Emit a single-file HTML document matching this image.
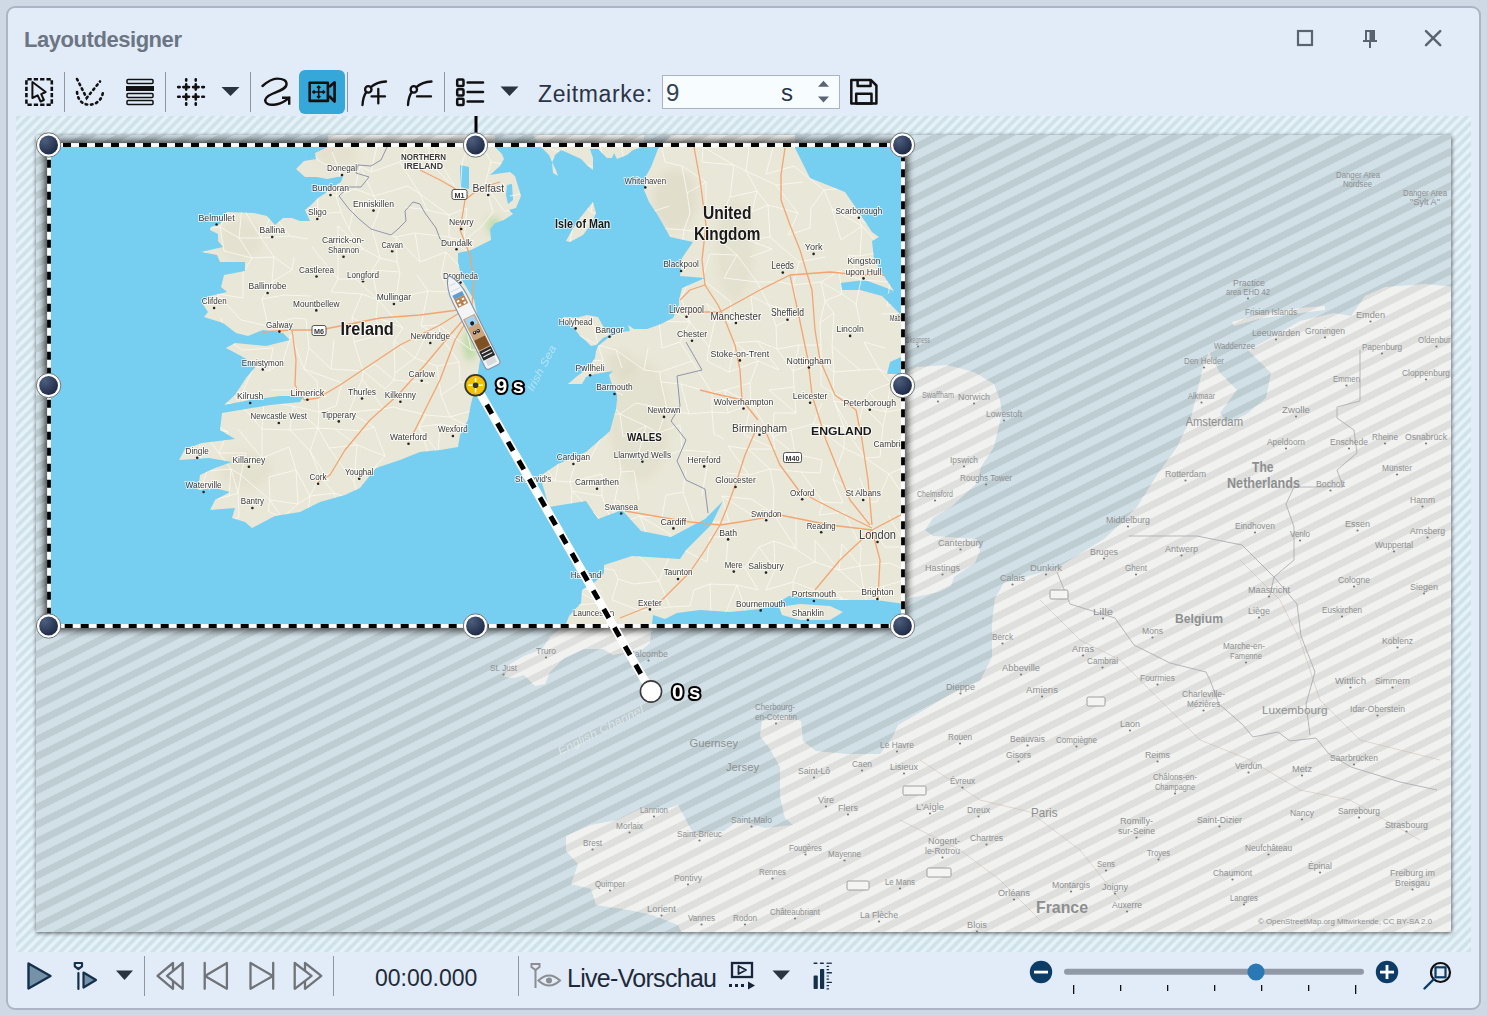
<!DOCTYPE html>
<html><head><meta charset="utf-8">
<style>
html,body{margin:0;padding:0}
body{width:1487px;height:1016px;background:#cfd9e5;position:relative;overflow:hidden;font-family:"Liberation Sans",sans-serif}
.win{position:absolute;left:6px;top:6px;width:1471px;height:1000px;border:2px solid #aab5c5;border-radius:9px;background:#e2ecf8}
.t{position:absolute;white-space:nowrap;line-height:1}
svg{position:absolute;left:0;top:0}
</style></head><body>
<div class="win"></div>
<div class="t" style="left:24px;top:29px;font-size:22px;font-weight:bold;color:#6b7583;letter-spacing:-0.45px">Layoutdesigner</div>
<div class="t" style="left:538px;top:83px;font-size:23px;color:#2a3444;letter-spacing:0.6px">Zeitmarke:</div>
<div style="position:absolute;left:662px;top:75px;width:176px;height:32px;border:1px solid #a9b4c0;background:#f6fcff"></div>
<div class="t" style="left:666px;top:81px;font-size:24px;color:#36404f">9</div>
<div class="t" style="left:781px;top:81px;font-size:24px;color:#2a3444">s</div>
<div class="t" style="left:375px;top:967px;font-size:23px;color:#1e2a3a">00:00.000</div>
<div class="t" style="left:567px;top:966px;font-size:25px;color:#1e2a3a;letter-spacing:-0.7px">Live-Vorschau</div>

<svg width="1487" height="1016" viewBox="0 0 1487 1016" id="map" font-family="Liberation Sans, sans-serif">
<defs>
<pattern id="frameH" patternUnits="userSpaceOnUse" width="10.2" height="10.2" x="0" y="0">
<rect width="10.2" height="10.2" fill="#e3f3fa"/>
<path d="M0 10.2 L10.2 0 L10.2 5.1 L5.1 10.2 Z M0 0 L5.1 0 L0 5.1 Z" fill="#d2e0e7"/>
</pattern>
<pattern id="seaH" patternUnits="userSpaceOnUse" width="34" height="17" x="0" y="6">
<rect width="34" height="17" fill="#d1e0e7"/>
<path d="M0 17 L34 0 L34 8 L0 25 Z M0 0 L34 -17 L34 -9 L0 8 Z" fill="#bdcdd2" shape-rendering="crispEdges"/>
</pattern>
<pattern id="landH" patternUnits="userSpaceOnUse" width="34" height="17" x="0" y="6">
<rect width="34" height="17" fill="#f1f2ef"/>
<path d="M0 17 L34 0 L34 8 L0 25 Z M0 0 L34 -17 L34 -9 L0 8 Z" fill="#dfdfdd" shape-rendering="crispEdges"/>
</pattern>
<radialGradient id="hgrad" cx="0.3" cy="0.25" r="0.9">
<stop offset="0" stop-color="#4d5e7e"/><stop offset="1" stop-color="#18243f"/>
</radialGradient>
<g id="land">
<path d="M328 130 L328 147 L315 153 L316 159 L304 161 L296 169 L305 177 L317 177 L327 179 L343 176 L341 182 L335 186 L327 192 L318 198 L310 206 L305 210 L310 221 L300 221 L292 218 L283 218 L275 225 L267 216 L254 213 L227 212 L220 224 L211 227 L210 230 L218 234 L218 241 L223 247 L201 252 L217 255 L220 262 L245 262 L245 271 L224 275 L221 287 L227 292 L210 296 L202 303 L208 312 L204 317 L223 323 L236 333 L248 336 L263 330 L283 333 L290 340 L266 346 L256 345 L235 343 L226 348 L241 356 L257 365 L246 378 L235 395 L224 405 L250 400 L280 396 L304 396 L300 402 L270 405 L240 410 L222 413 L220 430 L235 439 L202 443 L185 449 L179 460 L209 458 L232 462 L215 468 L200 475 L198 490 L215 488 L230 492 L215 500 L210 510 L235 508 L232 518 L245 522 L252 528 L275 516 L300 512 L320 502 L345 495 L360 488 L376 468 L400 460 L420 452 L440 450 L458 447 L460 435 L468 420 L471 404 L477 380 L480 360 L481 345 L478 318 L474 300 L462 280 L458 262 L458 253 L471 250 L481 245 L491 240 L490 229 L495 223 L504 220 L513 214 L509 210 L516 208 L521 196 L519 189 L515 176 L510 172 L496 174 L490 175 L500 166 L504 159 L502 154 L495 147 L495 130 Z"/>
<path d="M530 130 L541 147 L549 155 L553 164 L556 170 L558 176 L553 173 L552 163 L555 155 L561 150 L568 153 L581 159 L589 167 L593 170 L593 158 L590 149 L598 149 L607 158 L612 158 L614 153 L617 159 L627 155 L633 150 L642 147 L646 130 L676 130 L660 147 L658 149 L651 167 L646 176 L644 190 L649 202 L657 214 L664 226 L670 237 L693 242 L682 258 L680 276 L705 278 L682 288 L679 300 L679 305 L673 318 L661 324 L647 329 L634 329 L628 325 L630 331 L620 332 L608 338 L598 346 L596 351 L595 358 L588 368 L576 377 L568 384 L582 384 L586 377 L595 374 L613 371 L609 375 L611 382 L617 394 L617 400 L616 409 L610 431 L586 452 L558 464 L540 476 L549 507 L586 501 L598 519 L622 510 L641 531 L671 537 L705 519 L723 501 L711 525 L686 550 L680 559 L632 556 L604 565 L604 573 L595 582 L582 590 L581 603 L569 616 L566 624 L550 637 L542 649 L524 656 L510 664 L504 677 L514 678 L524 675 L535 686 L545 684 L550 672 L564 658 L584 649 L603 649 L613 655 L628 652 L643 649 L650 643 L653 615 L665 619 L677 613 L700 610 L730 612 L760 609 L775 604 L789 596 L830 600 L876 600 L904 604 L910 598 L939 592 L951 586 L954 577 L975 563 L980 551 L977 539 L933 536 L925 530 L933 518 L951 507 L977 483 L981 467 L994 447 L997 434 L1002 414 L1000 400 L994 384 L974 372 L947 365 L917 367 L903 374 L887 374 L890 362 L901 357 L903 318 L899 313 L882 296 L894 291 L884 276 L874 259 L872 241 L879 237 L872 232 L862 217 L852 202 L845 192 L820 182 L810 178 L795 148 L795 130 Z"/>
<path d="M593 202 L596 213 L592 223 L583 235 L570 242 L566 241 L572 230 L580 218 L588 208 Z"/>
<path d="M779 607 L800 604 L830 606 L843 612 L830 620 L800 620 L782 615 Z"/>
<path d="M587 315 L598 317 L603 326 L610 335 L603 338 L596 345 L591 346 L586 341 L580 336 L575 329 L570 324 L561 320 L564 317 L576 318 Z"/>
<path d="M1455 287 L1425 284 L1385 287 L1365 296 L1351 316 L1334 313 L1300 321 L1271 338 L1248 350 L1271 373 L1266 398 L1248 413 L1228 424 L1220 413 L1237 390 L1220 373 L1213 360 L1209 352 L1203 367 L1197 393 L1191 418 L1177 447 L1157 475 L1137 507 L1117 527 L1104 539 L1057 568 L1004 583 L995 598 L992 622 L992 657 L980 681 L954 692 L924 710 L898 725 L893 736 L880 754 L847 754 L816 751 L803 741 L801 721 L785 716 L762 721 L760 736 L770 749 L780 767 L780 797 L785 818 L793 825 L765 828 L739 820 L724 831 L693 833 L678 805 L663 810 L642 808 L617 820 L591 825 L566 836 L566 851 L578 864 L571 884 L591 889 L596 905 L629 910 L652 915 L678 925 L683 935 L1455 935 Z"/>
<path d="M1232 322 L1260 314 L1300 308 L1325 306 L1325 310 L1300 313 L1262 318 L1234 326 Z"/>
</g>
<g id="lakes">
<path d="M460 165 L469 167 L469 189 L460 187 Z"/>
<path d="M507 185 L512 184 L513 200 L508 204 L506 195 Z"/>
<path d="M840 283 L865 280 L884 287 L894 291 L882 296 L860 290 L842 290 Z"/>
</g>
<clipPath id="landclip"><path d="M328 130 L328 147 L315 153 L316 159 L304 161 L296 169 L305 177 L317 177 L327 179 L343 176 L341 182 L335 186 L327 192 L318 198 L310 206 L305 210 L310 221 L300 221 L292 218 L283 218 L275 225 L267 216 L254 213 L227 212 L220 224 L211 227 L210 230 L218 234 L218 241 L223 247 L201 252 L217 255 L220 262 L245 262 L245 271 L224 275 L221 287 L227 292 L210 296 L202 303 L208 312 L204 317 L223 323 L236 333 L248 336 L263 330 L283 333 L290 340 L266 346 L256 345 L235 343 L226 348 L241 356 L257 365 L246 378 L235 395 L224 405 L250 400 L280 396 L304 396 L300 402 L270 405 L240 410 L222 413 L220 430 L235 439 L202 443 L185 449 L179 460 L209 458 L232 462 L215 468 L200 475 L198 490 L215 488 L230 492 L215 500 L210 510 L235 508 L232 518 L245 522 L252 528 L275 516 L300 512 L320 502 L345 495 L360 488 L376 468 L400 460 L420 452 L440 450 L458 447 L460 435 L468 420 L471 404 L477 380 L480 360 L481 345 L478 318 L474 300 L462 280 L458 262 L458 253 L471 250 L481 245 L491 240 L490 229 L495 223 L504 220 L513 214 L509 210 L516 208 L521 196 L519 189 L515 176 L510 172 L496 174 L490 175 L500 166 L504 159 L502 154 L495 147 L495 130 Z"/>
<path d="M530 130 L541 147 L549 155 L553 164 L556 170 L558 176 L553 173 L552 163 L555 155 L561 150 L568 153 L581 159 L589 167 L593 170 L593 158 L590 149 L598 149 L607 158 L612 158 L614 153 L617 159 L627 155 L633 150 L642 147 L646 130 L676 130 L660 147 L658 149 L651 167 L646 176 L644 190 L649 202 L657 214 L664 226 L670 237 L693 242 L682 258 L680 276 L705 278 L682 288 L679 300 L679 305 L673 318 L661 324 L647 329 L634 329 L628 325 L630 331 L620 332 L608 338 L598 346 L596 351 L595 358 L588 368 L576 377 L568 384 L582 384 L586 377 L595 374 L613 371 L609 375 L611 382 L617 394 L617 400 L616 409 L610 431 L586 452 L558 464 L540 476 L549 507 L586 501 L598 519 L622 510 L641 531 L671 537 L705 519 L723 501 L711 525 L686 550 L680 559 L632 556 L604 565 L604 573 L595 582 L582 590 L581 603 L569 616 L566 624 L550 637 L542 649 L524 656 L510 664 L504 677 L514 678 L524 675 L535 686 L545 684 L550 672 L564 658 L584 649 L603 649 L613 655 L628 652 L643 649 L650 643 L653 615 L665 619 L677 613 L700 610 L730 612 L760 609 L775 604 L789 596 L830 600 L876 600 L904 604 L910 598 L939 592 L951 586 L954 577 L975 563 L980 551 L977 539 L933 536 L925 530 L933 518 L951 507 L977 483 L981 467 L994 447 L997 434 L1002 414 L1000 400 L994 384 L974 372 L947 365 L917 367 L903 374 L887 374 L890 362 L901 357 L903 318 L899 313 L882 296 L894 291 L884 276 L874 259 L872 241 L879 237 L872 232 L862 217 L852 202 L845 192 L820 182 L810 178 L795 148 L795 130 Z"/>
<path d="M593 202 L596 213 L592 223 L583 235 L570 242 L566 241 L572 230 L580 218 L588 208 Z"/>
<path d="M587 315 L598 317 L603 326 L610 335 L603 338 L596 345 L591 346 L586 341 L580 336 L575 329 L570 324 L561 320 L564 317 L576 318 Z"/></clipPath>
<clipPath id="mapclip"><rect x="36" y="135" width="1415" height="797"/></clipPath>
<clipPath id="selclip"><rect x="49" y="145" width="854" height="481"/></clipPath>
<filter id="blur6" x="-10%" y="-10%" width="120%" height="120%"><feGaussianBlur stdDeviation="3.5"/></filter>
<filter id="blur3" x="-10%" y="-10%" width="120%" height="120%"><feGaussianBlur stdDeviation="2"/></filter>
</defs>
<rect x="16" y="116" width="1455" height="836" fill="url(#frameH)"/>
<rect x="36.5" y="136" width="1415" height="797" fill="#000" opacity="0.62" filter="url(#blur3)"/>
<g clip-path="url(#mapclip)">
<rect x="36" y="135" width="1415" height="797" fill="url(#seaH)"/>
<use href="#land" fill="url(#landH)"/>
<use href="#lakes" fill="url(#seaH)"/>
<g fill="none" stroke="#a9abb3" stroke-width="1" opacity="0.85" stroke-linejoin="round">
<path d="M1057 572 L1070 604 L1115 618 L1134 645 L1170 663 L1206 672 L1210 680 L1219 704 L1242 724 L1253 737 L1278 732 L1290 741 L1316 738 L1329 754 L1351 767 L1400 782 L1437 790"/>
<path d="M1129 536 L1197 536 L1242 545 L1274 577 L1270 595"/>
<path d="M1274 577 L1297 604 L1301 636 L1315 672 L1306 704 L1310 735"/>
<path d="M1360 350 L1360 401 L1337 407 L1337 418 L1354 430 L1357 453 L1337 470 L1343 487 L1294 487 L1286 504 L1294 527 L1294 560 L1274 577"/>
</g>
<g fill="#f4f4f2" stroke="#8a8a8a" stroke-width="0.8">
<rect x="1050" y="590" width="18" height="9" rx="1.5"/><rect x="1087" y="697" width="18" height="9" rx="1.5"/>
<rect x="903" y="786" width="23" height="9" rx="1.5"/><rect x="847" y="881" width="22" height="9" rx="1.5"/><rect x="927" y="868" width="24" height="9" rx="1.5"/>
</g>
<g fill="none" stroke="#c9b6a6" stroke-width="0.8" opacity="0.6">
<path d="M1040 600 L1080 640 L1120 660 L1160 700 L1200 740 L1250 760 L1300 790 L1350 800 L1420 840"/>
<path d="M920 760 L980 800 L1030 812 L1080 850 L1120 900"/>
<path d="M900 820 L960 850 L1000 880 L1040 920"/>
<path d="M1240 560 L1280 600 L1300 640 L1320 700 L1360 740 L1440 760"/>
</g>
<g fill="#7d7d7d">
<circle cx="974.0" cy="403.5" r="1.1"/>
<circle cx="938.0" cy="401.5" r="1.1"/>
<circle cx="1004.0" cy="420.5" r="1.1"/>
<circle cx="964.0" cy="466.5" r="1.1"/>
<circle cx="986.0" cy="484.5" r="1.1"/>
<circle cx="935.0" cy="500.5" r="1.1"/>
<circle cx="960.5" cy="549.5" r="1.1"/>
<circle cx="942.5" cy="574.5" r="1.1"/>
<circle cx="1012.5" cy="584.5" r="1.1"/>
<circle cx="1046.0" cy="574.5" r="1.1"/>
<circle cx="1104.0" cy="558.5" r="1.1"/>
<circle cx="1181.5" cy="555.5" r="1.1"/>
<circle cx="1136.0" cy="574.5" r="1.1"/>
<circle cx="1128.0" cy="526.5" r="1.1"/>
<circle cx="1185.5" cy="480.5" r="1.1"/>
<circle cx="1255.0" cy="532.5" r="1.1"/>
<circle cx="1300.0" cy="540.5" r="1.1"/>
<circle cx="1357.5" cy="530.5" r="1.1"/>
<circle cx="1394.0" cy="551.5" r="1.1"/>
<circle cx="1427.5" cy="537.5" r="1.1"/>
<circle cx="1354.0" cy="586.5" r="1.1"/>
<circle cx="1424.0" cy="593.5" r="1.1"/>
<circle cx="1269.0" cy="596.5" r="1.1"/>
<circle cx="1259.0" cy="617.5" r="1.1"/>
<circle cx="1103.0" cy="618.5" r="1.1"/>
<circle cx="1152.5" cy="637.5" r="1.1"/>
<circle cx="1002.5" cy="643.5" r="1.1"/>
<circle cx="1083.0" cy="655.5" r="1.1"/>
<circle cx="1102.5" cy="667.5" r="1.1"/>
<circle cx="1021.0" cy="674.5" r="1.1"/>
<circle cx="1157.5" cy="684.5" r="1.1"/>
<circle cx="1246.0" cy="662.5" r="1.1"/>
<circle cx="1342.0" cy="616.5" r="1.1"/>
<circle cx="1397.5" cy="647.5" r="1.1"/>
<circle cx="1350.5" cy="687.5" r="1.1"/>
<circle cx="1392.5" cy="687.5" r="1.1"/>
<circle cx="1377.5" cy="715.5" r="1.1"/>
<circle cx="960.5" cy="693.5" r="1.1"/>
<circle cx="1042.0" cy="696.5" r="1.1"/>
<circle cx="1203.5" cy="710.5" r="1.1"/>
<circle cx="1130.0" cy="730.5" r="1.1"/>
<circle cx="897.0" cy="751.5" r="1.1"/>
<circle cx="960.0" cy="743.5" r="1.1"/>
<circle cx="1027.5" cy="745.5" r="1.1"/>
<circle cx="1076.5" cy="746.5" r="1.1"/>
<circle cx="1157.5" cy="761.5" r="1.1"/>
<circle cx="1354.0" cy="764.5" r="1.1"/>
<circle cx="1248.5" cy="772.5" r="1.1"/>
<circle cx="1302.0" cy="775.5" r="1.1"/>
<circle cx="904.0" cy="773.5" r="1.1"/>
<circle cx="1018.5" cy="761.5" r="1.1"/>
<circle cx="962.5" cy="787.5" r="1.1"/>
<circle cx="1175.0" cy="793.5" r="1.1"/>
<circle cx="930.0" cy="813.5" r="1.1"/>
<circle cx="978.5" cy="816.5" r="1.1"/>
<circle cx="1219.5" cy="826.5" r="1.1"/>
<circle cx="1302.0" cy="819.5" r="1.1"/>
<circle cx="1359.0" cy="817.5" r="1.1"/>
<circle cx="1136.5" cy="837.5" r="1.1"/>
<circle cx="1406.5" cy="831.5" r="1.1"/>
<circle cx="942.5" cy="857.5" r="1.1"/>
<circle cx="986.5" cy="844.5" r="1.1"/>
<circle cx="1158.5" cy="859.5" r="1.1"/>
<circle cx="1268.5" cy="854.5" r="1.1"/>
<circle cx="900.0" cy="888.5" r="1.1"/>
<circle cx="1106.0" cy="870.5" r="1.1"/>
<circle cx="1232.5" cy="879.5" r="1.1"/>
<circle cx="1320.0" cy="872.5" r="1.1"/>
<circle cx="1412.5" cy="889.5" r="1.1"/>
<circle cx="1014.0" cy="899.5" r="1.1"/>
<circle cx="1071.0" cy="891.5" r="1.1"/>
<circle cx="1115.0" cy="893.5" r="1.1"/>
<circle cx="1127.0" cy="911.5" r="1.1"/>
<circle cx="1244.0" cy="904.5" r="1.1"/>
<circle cx="977.0" cy="931.5" r="1.1"/>
<circle cx="776.0" cy="723.5" r="1.1"/>
<circle cx="814.0" cy="777.5" r="1.1"/>
<circle cx="862.0" cy="770.5" r="1.1"/>
<circle cx="826.0" cy="806.5" r="1.1"/>
<circle cx="848.0" cy="814.5" r="1.1"/>
<circle cx="805.5" cy="854.5" r="1.1"/>
<circle cx="844.5" cy="860.5" r="1.1"/>
<circle cx="772.5" cy="878.5" r="1.1"/>
<circle cx="751.5" cy="826.5" r="1.1"/>
<circle cx="699.5" cy="840.5" r="1.1"/>
<circle cx="654.0" cy="816.5" r="1.1"/>
<circle cx="629.5" cy="832.5" r="1.1"/>
<circle cx="592.5" cy="849.5" r="1.1"/>
<circle cx="610.0" cy="890.5" r="1.1"/>
<circle cx="688.0" cy="884.5" r="1.1"/>
<circle cx="661.5" cy="915.5" r="1.1"/>
<circle cx="701.5" cy="924.5" r="1.1"/>
<circle cx="745.0" cy="924.5" r="1.1"/>
<circle cx="795.0" cy="918.5" r="1.1"/>
<circle cx="879.0" cy="921.5" r="1.1"/>
<circle cx="546.0" cy="657.5" r="1.1"/>
<circle cx="503.5" cy="674.5" r="1.1"/>
<circle cx="648.5" cy="660.5" r="1.1"/>
<circle cx="1204.0" cy="367.5" r="1.1"/>
<circle cx="1201.5" cy="402.5" r="1.1"/>
<circle cx="1276.0" cy="339.5" r="1.1"/>
<circle cx="1325.0" cy="337.5" r="1.1"/>
<circle cx="1370.5" cy="321.5" r="1.1"/>
<circle cx="1382.0" cy="353.5" r="1.1"/>
<circle cx="1436.5" cy="346.5" r="1.1"/>
<circle cx="1346.5" cy="385.5" r="1.1"/>
<circle cx="1426.0" cy="379.5" r="1.1"/>
<circle cx="1296.0" cy="416.5" r="1.1"/>
<circle cx="1286.0" cy="448.5" r="1.1"/>
<circle cx="1349.0" cy="448.5" r="1.1"/>
<circle cx="1385.0" cy="443.5" r="1.1"/>
<circle cx="1426.0" cy="443.5" r="1.1"/>
<circle cx="1397.0" cy="474.5" r="1.1"/>
<circle cx="1330.5" cy="490.5" r="1.1"/>
<circle cx="1422.5" cy="506.5" r="1.1"/>
<circle cx="1248.0" cy="298.5" r="1.1"/>
<circle cx="918.0" cy="346.5" r="1.1"/>
</g>
<text x="0" y="0" font-size="11" font-style="italic" fill="#fff" opacity="0.45" transform="translate(560 755) rotate(-27)" textLength="95" lengthAdjust="spacingAndGlyphs">English Channel</text>
<g font-family="Liberation Sans, sans-serif">
<text x="1252" y="472.0" font-size="14" font-weight="bold" fill="#8d8f91" textLength="21.5" lengthAdjust="spacingAndGlyphs">The</text>
<text x="1227" y="488.0" font-size="14" font-weight="bold" fill="#8d8f91" textLength="73.0" lengthAdjust="spacingAndGlyphs">Netherlands</text>
<text x="1185.5" y="426.0" font-size="12.5" font-weight="normal" fill="#8d8f91" textLength="57.5" lengthAdjust="spacingAndGlyphs">Amsterdam</text>
<text x="1175" y="623.4" font-size="13" font-weight="bold" fill="#8d8f91" textLength="48.0" lengthAdjust="spacingAndGlyphs">Belgium</text>
<text x="1262" y="713.8" font-size="11.5" font-weight="normal" fill="#8d8f91" textLength="65.5" lengthAdjust="spacingAndGlyphs">Luxembourg</text>
<text x="1031" y="817.0" font-size="12.5" font-weight="normal" fill="#8d8f91" textLength="26.5" lengthAdjust="spacingAndGlyphs">Paris</text>
<text x="1036" y="913.4" font-size="16" font-weight="bold" fill="#8d8f91" textLength="52.0" lengthAdjust="spacingAndGlyphs">France</text>
<text x="689.5" y="747.1" font-size="11.5" font-weight="normal" fill="#8d8f91" textLength="48.5" lengthAdjust="spacingAndGlyphs">Guernsey</text>
<text x="726" y="770.8" font-size="11.5" font-weight="normal" fill="#8d8f91" textLength="33.0" lengthAdjust="spacingAndGlyphs">Jersey</text>
<text x="958" y="400.4" font-size="9.5" font-weight="normal" fill="#8d8f91" textLength="32.0" lengthAdjust="spacingAndGlyphs">Norwich</text>
<text x="922" y="398.1" font-size="8.5" font-weight="normal" fill="#8d8f91" textLength="32.0" lengthAdjust="spacingAndGlyphs">Swaffham</text>
<text x="986" y="417.1" font-size="8.5" font-weight="normal" fill="#8d8f91" textLength="36.0" lengthAdjust="spacingAndGlyphs">Lowestoft</text>
<text x="950" y="463.1" font-size="8.5" font-weight="normal" fill="#8d8f91" textLength="28.0" lengthAdjust="spacingAndGlyphs">Ipswich</text>
<text x="960" y="481.1" font-size="8.5" font-weight="normal" fill="#8d8f91" textLength="52.0" lengthAdjust="spacingAndGlyphs">Roughs Tower</text>
<text x="917" y="497.1" font-size="8.5" font-weight="normal" fill="#8d8f91" textLength="36.0" lengthAdjust="spacingAndGlyphs">Chelmsford</text>
<text x="938" y="546.1" font-size="8.5" font-weight="normal" fill="#8d8f91" textLength="45.0" lengthAdjust="spacingAndGlyphs">Canterbury</text>
<text x="925" y="571.1" font-size="8.5" font-weight="normal" fill="#8d8f91" textLength="35.0" lengthAdjust="spacingAndGlyphs">Hastings</text>
<text x="1000" y="581.1" font-size="8.5" font-weight="normal" fill="#8d8f91" textLength="25.0" lengthAdjust="spacingAndGlyphs">Calais</text>
<text x="1030" y="571.1" font-size="8.5" font-weight="normal" fill="#8d8f91" textLength="32.0" lengthAdjust="spacingAndGlyphs">Dunkirk</text>
<text x="1090" y="555.1" font-size="8.5" font-weight="normal" fill="#8d8f91" textLength="28.0" lengthAdjust="spacingAndGlyphs">Bruges</text>
<text x="1165" y="552.1" font-size="8.5" font-weight="normal" fill="#8d8f91" textLength="33.0" lengthAdjust="spacingAndGlyphs">Antwerp</text>
<text x="1125" y="571.1" font-size="8.5" font-weight="normal" fill="#8d8f91" textLength="22.0" lengthAdjust="spacingAndGlyphs">Ghent</text>
<text x="1106" y="523.1" font-size="8.5" font-weight="normal" fill="#8d8f91" textLength="44.0" lengthAdjust="spacingAndGlyphs">Middelburg</text>
<text x="1165" y="477.1" font-size="8.5" font-weight="normal" fill="#8d8f91" textLength="41.0" lengthAdjust="spacingAndGlyphs">Rotterdam</text>
<text x="1235" y="529.1" font-size="8.5" font-weight="normal" fill="#8d8f91" textLength="40.0" lengthAdjust="spacingAndGlyphs">Eindhoven</text>
<text x="1290" y="537.1" font-size="8.5" font-weight="normal" fill="#8d8f91" textLength="20.0" lengthAdjust="spacingAndGlyphs">Venlo</text>
<text x="1345" y="527.1" font-size="8.5" font-weight="normal" fill="#8d8f91" textLength="25.0" lengthAdjust="spacingAndGlyphs">Essen</text>
<text x="1375" y="548.1" font-size="8.5" font-weight="normal" fill="#8d8f91" textLength="38.0" lengthAdjust="spacingAndGlyphs">Wuppertal</text>
<text x="1410" y="534.1" font-size="8.5" font-weight="normal" fill="#8d8f91" textLength="35.0" lengthAdjust="spacingAndGlyphs">Arnsberg</text>
<text x="1338" y="583.1" font-size="8.5" font-weight="normal" fill="#8d8f91" textLength="32.0" lengthAdjust="spacingAndGlyphs">Cologne</text>
<text x="1410" y="590.1" font-size="8.5" font-weight="normal" fill="#8d8f91" textLength="28.0" lengthAdjust="spacingAndGlyphs">Siegen</text>
<text x="1248" y="593.1" font-size="8.5" font-weight="normal" fill="#8d8f91" textLength="42.0" lengthAdjust="spacingAndGlyphs">Maastricht</text>
<text x="1248" y="614.1" font-size="8.5" font-weight="normal" fill="#8d8f91" textLength="22.0" lengthAdjust="spacingAndGlyphs">Liège</text>
<text x="1093" y="615.1" font-size="8.5" font-weight="normal" fill="#8d8f91" textLength="20.0" lengthAdjust="spacingAndGlyphs">Lille</text>
<text x="1142" y="634.1" font-size="8.5" font-weight="normal" fill="#8d8f91" textLength="21.0" lengthAdjust="spacingAndGlyphs">Mons</text>
<text x="992" y="640.1" font-size="8.5" font-weight="normal" fill="#8d8f91" textLength="21.0" lengthAdjust="spacingAndGlyphs">Berck</text>
<text x="1072" y="652.1" font-size="8.5" font-weight="normal" fill="#8d8f91" textLength="22.0" lengthAdjust="spacingAndGlyphs">Arras</text>
<text x="1087" y="664.1" font-size="8.5" font-weight="normal" fill="#8d8f91" textLength="31.0" lengthAdjust="spacingAndGlyphs">Cambrai</text>
<text x="1002" y="671.1" font-size="8.5" font-weight="normal" fill="#8d8f91" textLength="38.0" lengthAdjust="spacingAndGlyphs">Abbeville</text>
<text x="1140" y="681.1" font-size="8.5" font-weight="normal" fill="#8d8f91" textLength="35.0" lengthAdjust="spacingAndGlyphs">Fourmies</text>
<text x="1223" y="649.1" font-size="8.5" font-weight="normal" fill="#8d8f91" textLength="42.0" lengthAdjust="spacingAndGlyphs">Marche-en-</text>
<text x="1230" y="659.1" font-size="8.5" font-weight="normal" fill="#8d8f91" textLength="32.0" lengthAdjust="spacingAndGlyphs">Famenne</text>
<text x="1322" y="613.1" font-size="8.5" font-weight="normal" fill="#8d8f91" textLength="40.0" lengthAdjust="spacingAndGlyphs">Euskirchen</text>
<text x="1382" y="644.1" font-size="8.5" font-weight="normal" fill="#8d8f91" textLength="31.0" lengthAdjust="spacingAndGlyphs">Koblenz</text>
<text x="1335" y="684.1" font-size="8.5" font-weight="normal" fill="#8d8f91" textLength="31.0" lengthAdjust="spacingAndGlyphs">Wittlich</text>
<text x="1375" y="684.1" font-size="8.5" font-weight="normal" fill="#8d8f91" textLength="35.0" lengthAdjust="spacingAndGlyphs">Simmern</text>
<text x="1350" y="712.1" font-size="8.5" font-weight="normal" fill="#8d8f91" textLength="55.0" lengthAdjust="spacingAndGlyphs">Idar-Oberstein</text>
<text x="946" y="690.1" font-size="8.5" font-weight="normal" fill="#8d8f91" textLength="29.0" lengthAdjust="spacingAndGlyphs">Dieppe</text>
<text x="1026" y="693.1" font-size="8.5" font-weight="normal" fill="#8d8f91" textLength="32.0" lengthAdjust="spacingAndGlyphs">Amiens</text>
<text x="1182" y="697.1" font-size="8.5" font-weight="normal" fill="#8d8f91" textLength="43.0" lengthAdjust="spacingAndGlyphs">Charleville-</text>
<text x="1187" y="707.1" font-size="8.5" font-weight="normal" fill="#8d8f91" textLength="33.0" lengthAdjust="spacingAndGlyphs">Mézières</text>
<text x="1120" y="727.1" font-size="8.5" font-weight="normal" fill="#8d8f91" textLength="20.0" lengthAdjust="spacingAndGlyphs">Laon</text>
<text x="880" y="748.1" font-size="8.5" font-weight="normal" fill="#8d8f91" textLength="34.0" lengthAdjust="spacingAndGlyphs">Le Havre</text>
<text x="948" y="740.1" font-size="8.5" font-weight="normal" fill="#8d8f91" textLength="24.0" lengthAdjust="spacingAndGlyphs">Rouen</text>
<text x="1010" y="742.1" font-size="8.5" font-weight="normal" fill="#8d8f91" textLength="35.0" lengthAdjust="spacingAndGlyphs">Beauvais</text>
<text x="1056" y="743.1" font-size="8.5" font-weight="normal" fill="#8d8f91" textLength="41.0" lengthAdjust="spacingAndGlyphs">Compiègne</text>
<text x="1145" y="758.1" font-size="8.5" font-weight="normal" fill="#8d8f91" textLength="25.0" lengthAdjust="spacingAndGlyphs">Reims</text>
<text x="1330" y="761.1" font-size="8.5" font-weight="normal" fill="#8d8f91" textLength="48.0" lengthAdjust="spacingAndGlyphs">Saarbrücken</text>
<text x="1235" y="769.1" font-size="8.5" font-weight="normal" fill="#8d8f91" textLength="27.0" lengthAdjust="spacingAndGlyphs">Verdun</text>
<text x="1292" y="772.1" font-size="8.5" font-weight="normal" fill="#8d8f91" textLength="20.0" lengthAdjust="spacingAndGlyphs">Metz</text>
<text x="890" y="770.1" font-size="8.5" font-weight="normal" fill="#8d8f91" textLength="28.0" lengthAdjust="spacingAndGlyphs">Lisieux</text>
<text x="1006" y="758.1" font-size="8.5" font-weight="normal" fill="#8d8f91" textLength="25.0" lengthAdjust="spacingAndGlyphs">Gisors</text>
<text x="950" y="784.1" font-size="8.5" font-weight="normal" fill="#8d8f91" textLength="25.0" lengthAdjust="spacingAndGlyphs">Évreux</text>
<text x="1153" y="780.1" font-size="8.5" font-weight="normal" fill="#8d8f91" textLength="44.0" lengthAdjust="spacingAndGlyphs">Châlons-en-</text>
<text x="1155" y="790.1" font-size="8.5" font-weight="normal" fill="#8d8f91" textLength="40.0" lengthAdjust="spacingAndGlyphs">Champagne</text>
<text x="916" y="810.1" font-size="8.5" font-weight="normal" fill="#8d8f91" textLength="28.0" lengthAdjust="spacingAndGlyphs">L'Aigle</text>
<text x="967" y="813.1" font-size="8.5" font-weight="normal" fill="#8d8f91" textLength="23.0" lengthAdjust="spacingAndGlyphs">Dreux</text>
<text x="1197" y="823.1" font-size="8.5" font-weight="normal" fill="#8d8f91" textLength="45.0" lengthAdjust="spacingAndGlyphs">Saint-Dizier</text>
<text x="1290" y="816.1" font-size="8.5" font-weight="normal" fill="#8d8f91" textLength="24.0" lengthAdjust="spacingAndGlyphs">Nancy</text>
<text x="1338" y="814.1" font-size="8.5" font-weight="normal" fill="#8d8f91" textLength="42.0" lengthAdjust="spacingAndGlyphs">Sarrebourg</text>
<text x="1120" y="824.1" font-size="8.5" font-weight="normal" fill="#8d8f91" textLength="33.0" lengthAdjust="spacingAndGlyphs">Romilly-</text>
<text x="1118" y="834.1" font-size="8.5" font-weight="normal" fill="#8d8f91" textLength="37.0" lengthAdjust="spacingAndGlyphs">sur-Seine</text>
<text x="1385" y="828.1" font-size="8.5" font-weight="normal" fill="#8d8f91" textLength="43.0" lengthAdjust="spacingAndGlyphs">Strasbourg</text>
<text x="928" y="844.1" font-size="8.5" font-weight="normal" fill="#8d8f91" textLength="32.0" lengthAdjust="spacingAndGlyphs">Nogent-</text>
<text x="925" y="854.1" font-size="8.5" font-weight="normal" fill="#8d8f91" textLength="35.0" lengthAdjust="spacingAndGlyphs">le-Rotrou</text>
<text x="970" y="841.1" font-size="8.5" font-weight="normal" fill="#8d8f91" textLength="33.0" lengthAdjust="spacingAndGlyphs">Chartres</text>
<text x="1147" y="856.1" font-size="8.5" font-weight="normal" fill="#8d8f91" textLength="23.0" lengthAdjust="spacingAndGlyphs">Troyes</text>
<text x="1245" y="851.1" font-size="8.5" font-weight="normal" fill="#8d8f91" textLength="47.0" lengthAdjust="spacingAndGlyphs">Neufchâteau</text>
<text x="885" y="885.1" font-size="8.5" font-weight="normal" fill="#8d8f91" textLength="30.0" lengthAdjust="spacingAndGlyphs">Le Mans</text>
<text x="1097" y="867.1" font-size="8.5" font-weight="normal" fill="#8d8f91" textLength="18.0" lengthAdjust="spacingAndGlyphs">Sens</text>
<text x="1213" y="876.1" font-size="8.5" font-weight="normal" fill="#8d8f91" textLength="39.0" lengthAdjust="spacingAndGlyphs">Chaumont</text>
<text x="1308" y="869.1" font-size="8.5" font-weight="normal" fill="#8d8f91" textLength="24.0" lengthAdjust="spacingAndGlyphs">Épinal</text>
<text x="1390" y="876.1" font-size="8.5" font-weight="normal" fill="#8d8f91" textLength="45.0" lengthAdjust="spacingAndGlyphs">Freiburg im</text>
<text x="1395" y="886.1" font-size="8.5" font-weight="normal" fill="#8d8f91" textLength="35.0" lengthAdjust="spacingAndGlyphs">Breisgau</text>
<text x="998" y="896.1" font-size="8.5" font-weight="normal" fill="#8d8f91" textLength="32.0" lengthAdjust="spacingAndGlyphs">Orléans</text>
<text x="1052" y="888.1" font-size="8.5" font-weight="normal" fill="#8d8f91" textLength="38.0" lengthAdjust="spacingAndGlyphs">Montargis</text>
<text x="1102" y="890.1" font-size="8.5" font-weight="normal" fill="#8d8f91" textLength="26.0" lengthAdjust="spacingAndGlyphs">Joigny</text>
<text x="1112" y="908.1" font-size="8.5" font-weight="normal" fill="#8d8f91" textLength="30.0" lengthAdjust="spacingAndGlyphs">Auxerre</text>
<text x="1230" y="901.1" font-size="8.5" font-weight="normal" fill="#8d8f91" textLength="28.0" lengthAdjust="spacingAndGlyphs">Langres</text>
<text x="967" y="928.1" font-size="8.5" font-weight="normal" fill="#8d8f91" textLength="20.0" lengthAdjust="spacingAndGlyphs">Blois</text>
<text x="755" y="710.1" font-size="8.5" font-weight="normal" fill="#8d8f91" textLength="40.0" lengthAdjust="spacingAndGlyphs">Cherbourg-</text>
<text x="755" y="720.1" font-size="8.5" font-weight="normal" fill="#8d8f91" textLength="42.0" lengthAdjust="spacingAndGlyphs">en-Cotentin</text>
<text x="798" y="774.1" font-size="8.5" font-weight="normal" fill="#8d8f91" textLength="32.0" lengthAdjust="spacingAndGlyphs">Saint-Lô</text>
<text x="852" y="767.1" font-size="8.5" font-weight="normal" fill="#8d8f91" textLength="20.0" lengthAdjust="spacingAndGlyphs">Caen</text>
<text x="818" y="803.1" font-size="8.5" font-weight="normal" fill="#8d8f91" textLength="16.0" lengthAdjust="spacingAndGlyphs">Vire</text>
<text x="838" y="811.1" font-size="8.5" font-weight="normal" fill="#8d8f91" textLength="20.0" lengthAdjust="spacingAndGlyphs">Flers</text>
<text x="789" y="851.1" font-size="8.5" font-weight="normal" fill="#8d8f91" textLength="33.0" lengthAdjust="spacingAndGlyphs">Fougères</text>
<text x="828" y="857.1" font-size="8.5" font-weight="normal" fill="#8d8f91" textLength="33.0" lengthAdjust="spacingAndGlyphs">Mayenne</text>
<text x="759" y="875.1" font-size="8.5" font-weight="normal" fill="#8d8f91" textLength="27.0" lengthAdjust="spacingAndGlyphs">Rennes</text>
<text x="731" y="823.1" font-size="8.5" font-weight="normal" fill="#8d8f91" textLength="41.0" lengthAdjust="spacingAndGlyphs">Saint-Malo</text>
<text x="677" y="837.1" font-size="8.5" font-weight="normal" fill="#8d8f91" textLength="45.0" lengthAdjust="spacingAndGlyphs">Saint-Brieuc</text>
<text x="640" y="813.1" font-size="8.5" font-weight="normal" fill="#8d8f91" textLength="28.0" lengthAdjust="spacingAndGlyphs">Lannion</text>
<text x="616" y="829.1" font-size="8.5" font-weight="normal" fill="#8d8f91" textLength="27.0" lengthAdjust="spacingAndGlyphs">Morlaix</text>
<text x="583" y="846.1" font-size="8.5" font-weight="normal" fill="#8d8f91" textLength="19.0" lengthAdjust="spacingAndGlyphs">Brest</text>
<text x="595" y="887.1" font-size="8.5" font-weight="normal" fill="#8d8f91" textLength="30.0" lengthAdjust="spacingAndGlyphs">Quimper</text>
<text x="674" y="881.1" font-size="8.5" font-weight="normal" fill="#8d8f91" textLength="28.0" lengthAdjust="spacingAndGlyphs">Pontivy</text>
<text x="647" y="912.1" font-size="8.5" font-weight="normal" fill="#8d8f91" textLength="29.0" lengthAdjust="spacingAndGlyphs">Lorient</text>
<text x="688" y="921.1" font-size="8.5" font-weight="normal" fill="#8d8f91" textLength="27.0" lengthAdjust="spacingAndGlyphs">Vannes</text>
<text x="733" y="921.1" font-size="8.5" font-weight="normal" fill="#8d8f91" textLength="24.0" lengthAdjust="spacingAndGlyphs">Rodon</text>
<text x="770" y="915.1" font-size="8.5" font-weight="normal" fill="#8d8f91" textLength="50.0" lengthAdjust="spacingAndGlyphs">Châteaubriant</text>
<text x="860" y="918.1" font-size="8.5" font-weight="normal" fill="#8d8f91" textLength="38.0" lengthAdjust="spacingAndGlyphs">La Flèche</text>
<text x="536" y="654.1" font-size="8.5" font-weight="normal" fill="#8d8f91" textLength="20.0" lengthAdjust="spacingAndGlyphs">Truro</text>
<text x="490" y="671.1" font-size="8.5" font-weight="normal" fill="#8d8f91" textLength="27.0" lengthAdjust="spacingAndGlyphs">St. Just</text>
<text x="629" y="657.1" font-size="8.5" font-weight="normal" fill="#8d8f91" textLength="39.0" lengthAdjust="spacingAndGlyphs">Salcombe</text>
<text x="1184" y="364.1" font-size="8.5" font-weight="normal" fill="#8d8f91" textLength="40.0" lengthAdjust="spacingAndGlyphs">Den Helder</text>
<text x="1188" y="399.1" font-size="8.5" font-weight="normal" fill="#8d8f91" textLength="27.0" lengthAdjust="spacingAndGlyphs">Alkmaar</text>
<text x="1214" y="349.1" font-size="8.5" font-weight="normal" fill="#8d8f91" textLength="41.0" lengthAdjust="spacingAndGlyphs">Waddenzee</text>
<text x="1252" y="336.1" font-size="8.5" font-weight="normal" fill="#8d8f91" textLength="48.0" lengthAdjust="spacingAndGlyphs">Leeuwarden</text>
<text x="1305" y="334.1" font-size="8.5" font-weight="normal" fill="#8d8f91" textLength="40.0" lengthAdjust="spacingAndGlyphs">Groningen</text>
<text x="1356" y="318.1" font-size="8.5" font-weight="normal" fill="#8d8f91" textLength="29.0" lengthAdjust="spacingAndGlyphs">Emden</text>
<text x="1362" y="350.1" font-size="8.5" font-weight="normal" fill="#8d8f91" textLength="40.0" lengthAdjust="spacingAndGlyphs">Papenburg</text>
<text x="1418" y="343.1" font-size="8.5" font-weight="normal" fill="#8d8f91" textLength="37.0" lengthAdjust="spacingAndGlyphs">Oldenburg</text>
<text x="1333" y="382.1" font-size="8.5" font-weight="normal" fill="#8d8f91" textLength="27.0" lengthAdjust="spacingAndGlyphs">Emmen</text>
<text x="1402" y="376.1" font-size="8.5" font-weight="normal" fill="#8d8f91" textLength="48.0" lengthAdjust="spacingAndGlyphs">Cloppenburg</text>
<text x="1282" y="413.1" font-size="8.5" font-weight="normal" fill="#8d8f91" textLength="28.0" lengthAdjust="spacingAndGlyphs">Zwolle</text>
<text x="1267" y="445.1" font-size="8.5" font-weight="normal" fill="#8d8f91" textLength="38.0" lengthAdjust="spacingAndGlyphs">Apeldoorn</text>
<text x="1330" y="445.1" font-size="8.5" font-weight="normal" fill="#8d8f91" textLength="38.0" lengthAdjust="spacingAndGlyphs">Enschede</text>
<text x="1372" y="440.1" font-size="8.5" font-weight="normal" fill="#8d8f91" textLength="26.0" lengthAdjust="spacingAndGlyphs">Rheine</text>
<text x="1405" y="440.1" font-size="8.5" font-weight="normal" fill="#8d8f91" textLength="42.0" lengthAdjust="spacingAndGlyphs">Osnabrück</text>
<text x="1382" y="471.1" font-size="8.5" font-weight="normal" fill="#8d8f91" textLength="30.0" lengthAdjust="spacingAndGlyphs">Münster</text>
<text x="1316" y="487.1" font-size="8.5" font-weight="normal" fill="#8d8f91" textLength="29.0" lengthAdjust="spacingAndGlyphs">Bocholt</text>
<text x="1410" y="503.1" font-size="8.5" font-weight="normal" fill="#8d8f91" textLength="25.0" lengthAdjust="spacingAndGlyphs">Hamm</text>
<text x="1245" y="315.1" font-size="8.5" font-weight="normal" fill="#8d8f91" textLength="52.0" lengthAdjust="spacingAndGlyphs">Frisian Islands</text>
<text x="1233" y="286.1" font-size="8.5" font-weight="normal" fill="#8d8f91" textLength="32.0" lengthAdjust="spacingAndGlyphs">Practice</text>
<text x="1226" y="295.1" font-size="8.5" font-weight="normal" fill="#8d8f91" textLength="44.0" lengthAdjust="spacingAndGlyphs">area EHD 42</text>
<text x="1336" y="178.1" font-size="8.5" font-weight="normal" fill="#8d8f91" textLength="44.0" lengthAdjust="spacingAndGlyphs">Danger Area</text>
<text x="1343" y="187.1" font-size="8.5" font-weight="normal" fill="#8d8f91" textLength="29.0" lengthAdjust="spacingAndGlyphs">Nordsee</text>
<text x="1403" y="196.1" font-size="8.5" font-weight="normal" fill="#8d8f91" textLength="44.0" lengthAdjust="spacingAndGlyphs">Danger Area</text>
<text x="1410" y="205.1" font-size="8.5" font-weight="normal" fill="#8d8f91" textLength="30.0" lengthAdjust="spacingAndGlyphs">&quot;Sylt A&quot;</text>
<text x="906" y="343.1" font-size="8.5" font-weight="normal" fill="#8d8f91" textLength="24.0" lengthAdjust="spacingAndGlyphs">Skegness</text>
<text x="1258" y="923.7" font-size="7.5" font-weight="normal" fill="#8d8f91" textLength="174.0" lengthAdjust="spacingAndGlyphs">© OpenStreetMap.org Mitwirkende, CC BY-SA 2.0</text>
</g>
<rect x="49" y="145" width="854" height="481" fill="none" stroke="#000" stroke-width="9" opacity="0.72" filter="url(#blur6)"/>
<g clip-path="url(#selclip)">
<rect x="36" y="135" width="1415" height="795" fill="#76cef0"/>
<use href="#land" fill="#e9e7d7"/>
<use href="#lakes" fill="#76cef0"/>
<g clip-path="url(#landclip)" filter="url(#blur6)">
<ellipse cx="675" cy="200" rx="22" ry="30" fill="#cfcbb4" opacity="0.3"/>
<ellipse cx="735" cy="250" rx="18" ry="50" fill="#d3cfb8" opacity="0.25"/>
<ellipse cx="640" cy="420" rx="30" ry="60" fill="#d3cfb8" opacity="0.25"/>
<ellipse cx="620" cy="365" rx="14" ry="14" fill="#cfcbb4" opacity="0.28"/>
<ellipse cx="245" cy="470" rx="25" ry="18" fill="#d3cfb8" opacity="0.25"/>
<ellipse cx="240" cy="240" rx="20" ry="20" fill="#d3cfb8" opacity="0.22"/>
<ellipse cx="470" cy="345" rx="7" ry="16" fill="#bcd9a4" opacity="0.9"/>
<ellipse cx="494" cy="226" rx="7" ry="9" fill="#bcd9a4" opacity="0.9"/>
<ellipse cx="336" cy="155" rx="20" ry="10" fill="#d3cfb8" opacity="0.25"/>
</g>
<g fill="none" stroke="#fbfaf4" stroke-width="1" opacity="0.8" clip-path="url(#landclip)">
<path d="M45 139 L66 146 M49 187 L41 211 M41 211 L78 205 M41 232 L69 237 M41 232 L41 248 M41 248 L64 255 M47 282 L42 295 M50 328 L76 318 M50 328 L49 341 M56 358 L75 394 M54 384 L75 394 M54 384 L42 403 M54 384 L70 412 M42 403 L70 412 M42 403 L45 436 M42 403 L63 434 M45 436 L63 434 M45 436 L72 461 M43 454 L50 473 M43 454 L75 472 M50 473 L49 490 M49 490 L62 518 M41 514 L62 518 M41 514 L51 540 M45 564 L63 567 M47 582 L53 610 M47 582 L68 613 M53 610 L68 613 M66 146 L93 173 M70 173 L74 186 M74 186 L97 195 M74 186 L78 205 M78 205 L88 210 M78 205 L69 237 M69 237 L90 239 M69 237 L99 249 M64 255 L63 280 M63 280 L74 300 M74 300 L88 299 M74 300 L76 318 M74 300 L93 317 M76 318 L93 317 M73 345 L71 364 M71 364 L75 394 M75 394 L99 390 M75 394 L92 411 M70 412 L63 434 M70 412 L95 424 M63 434 L95 424 M72 461 L98 457 M72 461 L75 472 M75 472 L98 480 M75 472 L90 495 M68 500 L90 495 M62 518 L86 521 M62 518 L65 535 M62 518 L85 534 M65 535 L63 567 M63 567 L87 558 M64 581 L84 601 M68 613 L84 601 M85 144 L93 173 M93 173 L106 173 M88 210 L110 209 M90 239 L99 249 M90 239 L120 263 M99 249 L87 273 M99 249 L113 277 M87 273 L113 277 M87 273 L107 293 M88 299 L107 293 M88 299 L93 317 M93 317 L111 317 M84 342 L90 366 M90 366 L106 372 M90 366 L114 381 M92 411 L115 401 M92 411 L95 424 M95 424 L114 439 M95 424 L120 456 M98 457 L120 456 M98 457 L98 480 M98 480 L90 495 M98 480 L109 501 M90 495 L86 521 M90 495 L115 523 M85 534 L87 558 M87 558 L89 578 M87 558 L120 590 M89 578 L120 590 M89 578 L84 601 M84 601 L119 611 M108 143 L132 145 M108 143 L106 173 M106 173 L116 183 M116 183 L110 209 M110 209 L112 227 M112 227 L120 263 M113 277 L143 275 M113 277 L107 293 M111 317 L138 349 M119 338 L138 349 M106 372 L141 365 M106 372 L114 381 M114 381 L138 392 M114 381 L115 401 M114 381 L129 412 M115 401 L129 412 M115 401 L114 439 M115 401 L143 436 M114 439 L143 436 M110 473 L133 502 M109 501 L115 523 M115 523 L144 517 M115 523 L111 537 M111 537 L119 571 M119 571 L140 558 M120 590 L130 579 M120 590 L142 612 M132 145 L134 159 M134 159 L166 170 M134 159 L128 185 M134 159 L156 190 M128 185 L156 190 M128 185 L132 214 M132 214 L152 203 M132 214 L143 232 M132 214 L166 235 M143 232 L166 235 M143 232 L143 263 M143 275 L157 283 M132 295 L163 294 M131 316 L154 318 M131 316 L138 349 M131 316 L154 344 M138 349 L154 344 M138 349 L141 365 M141 365 L154 364 M141 365 L138 392 M138 392 L152 394 M129 412 L156 408 M143 436 L140 453 M143 436 L157 460 M140 453 L131 480 M140 453 L158 476 M131 480 L158 476 M131 480 L133 502 M133 502 L158 489 M133 502 L144 517 M144 517 L134 548 M134 548 L150 546 M142 612 L155 607 M166 170 L174 168 M166 170 L176 185 M158 262 L187 254 M158 262 L157 283 M157 283 L163 294 M163 294 L154 318 M154 344 L180 350 M154 344 L154 364 M154 364 L183 371 M152 394 L187 383 M159 437 L185 425 M159 437 L157 460 M157 460 L174 452 M157 460 L158 476 M158 476 L173 471 M158 489 L173 500 M157 514 L185 525 M150 546 L174 544 M162 586 L186 592 M162 586 L155 607 M174 168 L210 172 M174 168 L176 185 M176 185 L184 211 M184 211 L181 237 M187 254 L206 247 M180 302 L194 296 M180 302 L179 322 M179 322 L204 321 M179 322 L180 350 M179 322 L195 351 M180 350 L195 351 M183 371 L207 373 M187 383 L196 383 M187 383 L181 416 M181 416 L195 413 M181 416 L198 425 M185 425 L198 425 M174 452 L173 471 M173 471 L173 500 M173 500 L196 504 M185 525 L203 522 M185 525 L174 544 M185 525 L195 534 M174 544 L183 557 M174 544 L205 562 M183 557 L205 562 M183 557 L186 592 M186 592 L204 612 M176 614 L204 612 M200 145 L210 172 M210 172 L217 173 M210 172 L197 188 M197 188 L223 186 M202 208 L225 218 M202 208 L197 230 M197 230 L220 227 M206 247 L203 276 M203 276 L218 272 M203 276 L194 296 M194 296 L204 321 M204 321 L195 351 M195 351 L207 373 M207 373 L224 360 M207 373 L196 383 M196 383 L222 379 M196 383 L195 413 M195 413 L220 401 M195 413 L228 432 M198 425 L228 432 M198 425 L201 460 M198 425 L219 453 M201 460 L207 471 M207 471 L231 469 M207 471 L196 504 M196 504 L229 496 M196 504 L203 522 M196 504 L224 524 M203 522 L195 534 M203 522 L222 541 M195 534 L222 541 M195 534 L205 562 M195 534 L227 571 M205 562 L227 571 M195 592 L221 590 M195 592 L227 609 M204 612 L227 609 M217 151 L217 173 M217 173 L239 193 M223 186 L239 193 M225 218 L220 227 M220 227 L239 238 M220 227 L224 251 M224 251 L252 258 M217 294 L243 298 M217 294 L241 320 M221 318 L228 340 M228 340 L242 350 M228 340 L224 360 M224 360 L254 366 M222 379 L242 394 M222 379 L220 401 M222 379 L243 407 M220 401 L243 407 M228 432 L219 453 M219 453 L246 453 M219 453 L231 469 M231 469 L241 475 M231 469 L229 496 M231 469 L238 493 M229 496 L238 493 M224 524 L239 517 M222 541 L243 559 M227 571 L243 559 M227 571 L221 590 M221 590 L227 609 M244 143 L239 161 M239 161 L266 164 M239 161 L276 183 M239 193 L276 183 M242 206 L239 238 M242 206 L261 238 M239 238 L261 238 M239 238 L252 258 M252 258 L274 257 M252 258 L243 273 M243 273 L243 298 M241 320 L268 326 M242 350 L273 348 M254 366 L269 371 M254 366 L242 394 M242 394 L243 407 M242 394 L264 401 M243 407 L264 401 M243 407 L262 429 M238 429 L262 458 M246 453 L241 475 M241 475 L238 493 M241 475 L270 500 M238 493 L239 517 M239 533 L243 559 M239 533 L268 564 M243 559 L247 585 M247 585 L250 610 M250 610 L272 603 M266 164 L294 162 M276 183 L294 197 M276 183 L272 213 M276 183 L290 209 M272 213 L290 209 M272 213 L261 238 M272 213 L290 236 M261 238 L290 236 M261 238 L274 257 M274 257 L272 282 M274 257 L292 270 M272 282 L292 270 M272 282 L262 299 M262 299 L284 295 M262 299 L268 326 M268 326 L294 318 M273 348 L269 371 M269 371 L283 361 M271 390 L293 390 M264 401 L293 406 M264 401 L262 429 M262 429 L290 430 M262 429 L262 458 M262 458 L289 447 M269 477 L296 470 M269 477 L270 500 M270 500 L298 504 M270 500 L268 511 M270 500 L282 518 M268 511 L282 518 M273 545 L295 548 M268 564 L271 578 M271 578 L285 592 M271 578 L272 603 M272 603 L285 608 M294 197 L317 189 M294 197 L290 209 M294 197 L318 214 M290 236 L308 239 M294 257 L292 270 M284 295 L311 296 M294 318 L306 319 M291 335 L283 361 M291 335 L304 369 M293 406 L319 412 M293 406 L290 430 M293 406 L318 428 M290 430 L318 428 M290 430 L310 451 M289 447 L296 470 M296 470 L298 504 M296 470 L310 496 M298 504 L310 496 M298 504 L282 518 M282 518 L308 512 M295 548 L289 559 M289 559 L285 592 M285 592 L308 581 M285 592 L285 608 M306 145 L319 161 M319 161 L340 172 M317 189 L336 196 M317 189 L318 214 M318 214 L341 212 M312 247 L338 279 M306 319 L309 348 M309 348 L304 369 M309 348 L331 369 M304 369 L317 381 M304 369 L342 383 M317 381 L319 412 M319 412 L336 406 M319 412 L318 428 M318 428 L335 429 M318 428 L310 451 M318 428 L329 448 M310 451 L320 476 M310 451 L329 481 M320 476 L310 496 M320 476 L334 493 M310 496 L334 493 M310 496 L308 512 M308 512 L306 546 M306 546 L333 535 M306 546 L309 570 M309 570 L329 556 M309 570 L308 581 M309 570 L331 578 M308 581 L331 578 M332 152 L340 172 M340 172 L336 196 M336 196 L355 189 M336 196 L341 212 M341 212 L349 229 M338 226 L338 254 M338 226 L363 249 M338 254 L363 249 M338 254 L338 279 M338 279 L356 279 M338 279 L331 292 M331 292 L362 294 M334 340 L331 369 M331 369 L363 371 M342 383 L336 406 M335 429 L362 431 M335 429 L357 445 M329 448 L357 445 M329 448 L354 482 M334 493 L361 503 M334 493 L341 527 M341 527 L333 535 M341 527 L350 535 M333 535 L350 535 M333 535 L356 566 M329 556 L331 578 M331 578 L363 589 M331 578 L330 603 M330 603 L358 611 M360 166 L371 172 M360 166 L355 189 M360 166 L374 196 M355 189 L374 196 M354 208 L380 208 M354 208 L349 229 M349 229 L363 249 M363 249 L380 258 M356 279 L378 300 M362 294 L378 300 M362 294 L352 317 M352 317 L354 342 M352 317 L380 335 M354 342 L380 335 M354 342 L363 371 M363 371 L375 364 M363 371 L362 379 M363 371 L385 389 M362 379 L349 412 M362 379 L384 409 M349 412 L384 409 M349 412 L374 427 M362 431 L374 427 M357 445 L385 456 M357 445 L354 482 M354 482 L361 503 M361 503 L364 515 M356 566 L374 556 M377 146 L371 172 M371 172 L400 162 M374 196 L408 186 M374 196 L380 208 M380 208 L372 229 M372 229 L396 237 M372 229 L380 258 M380 258 L397 262 M380 258 L372 270 M372 270 L400 272 M372 270 L378 300 M378 300 L396 298 M378 300 L376 317 M378 300 L403 328 M376 317 L403 328 M376 317 L380 335 M375 364 L394 380 M385 389 L394 380 M384 409 L393 407 M374 427 L385 456 M385 456 L375 467 M375 467 L407 472 M375 467 L378 500 M378 500 L377 515 M377 515 L404 512 M381 548 L374 556 M374 556 L395 577 M381 602 L396 605 M405 149 L429 139 M405 149 L400 162 M400 162 L420 194 M408 186 L420 194 M405 207 L427 210 M396 237 L415 233 M396 237 L397 262 M396 237 L420 262 M397 262 L400 272 M400 272 L396 298 M396 298 L428 291 M403 328 L394 341 M394 341 L395 373 M394 341 L415 358 M395 373 L415 358 M395 373 L394 380 M394 380 L429 383 M393 407 L426 415 M404 461 L407 472 M404 512 L414 523 M404 512 L403 539 M403 539 L429 543 M403 539 L398 560 M395 577 L396 605 M396 605 L429 614 M429 139 L442 141 M429 139 L429 162 M429 139 L443 167 M429 162 L443 167 M429 162 L451 184 M420 194 L427 210 M420 194 L449 215 M427 210 L449 215 M415 233 L449 237 M415 233 L420 262 M420 262 L446 252 M417 275 L428 291 M428 291 L449 292 M428 291 L421 326 M421 326 L439 325 M421 326 L440 336 M426 336 L415 358 M415 358 L437 366 M426 415 L450 417 M426 415 L419 427 M419 427 L440 424 M419 427 L429 455 M419 427 L438 453 M418 478 L419 493 M419 493 L440 496 M414 523 L446 522 M429 543 L448 547 M429 543 L429 555 M429 555 L418 585 M418 585 L429 614 M442 141 L470 140 M443 167 L460 195 M449 215 L467 208 M449 215 L449 237 M449 237 L464 241 M449 237 L466 251 M446 252 L441 275 M446 252 L471 279 M441 275 L449 292 M439 325 L440 336 M439 325 L471 350 M440 336 L459 362 M437 366 L459 362 M437 366 L441 395 M441 395 L460 382 M441 395 L450 417 M450 417 L474 410 M450 417 L473 429 M440 424 L473 429 M440 424 L438 453 M438 453 L472 452 M438 453 L462 479 M447 474 L440 496 M447 474 L473 491 M440 496 L473 491 M440 496 L446 522 M446 522 L468 521 M446 522 L448 547 M447 557 L460 558 M447 557 L449 582 M447 557 L462 587 M449 582 L462 587 M449 582 L445 605 M470 140 L480 142 M470 140 L462 163 M462 163 L460 195 M467 208 L464 241 M464 241 L481 227 M466 251 L486 256 M466 251 L471 279 M466 251 L490 270 M471 279 L474 293 M474 293 L466 326 M466 326 L487 318 M466 326 L471 350 M466 326 L485 350 M471 350 L485 350 M459 362 L460 382 M460 382 L486 386 M474 410 L494 417 M474 410 L486 426 M472 452 L480 481 M473 491 L468 521 M461 539 L460 558 M461 539 L480 564 M460 558 L462 587 M462 587 L490 592 M468 602 L481 609 M480 142 L508 145 M480 142 L491 162 M491 162 L504 164 M491 162 L485 184 M485 184 L493 212 M485 184 L504 211 M493 212 L481 227 M486 256 L505 249 M486 256 L490 270 M490 270 L483 302 M490 270 L510 292 M483 302 L510 292 M483 302 L487 318 M487 318 L485 350 M485 350 L516 345 M485 350 L485 366 M485 366 L486 386 M486 386 L508 415 M494 417 L486 426 M486 426 L515 426 M486 426 L492 448 M492 448 L505 451 M492 448 L480 481 M492 448 L510 473 M480 481 L487 502 M480 481 L504 493 M487 502 L486 525 M486 525 L514 525 M486 525 L503 542 M487 536 L514 556 M480 564 L514 556 M490 592 L515 579 M490 592 L481 609 M481 609 L512 608 M508 145 L504 164 M510 196 L531 192 M504 211 L531 210 M515 240 L524 235 M505 249 L532 251 M517 285 L536 281 M517 285 L510 292 M510 292 L517 319 M517 319 L532 315 M517 319 L516 345 M516 345 L526 342 M516 345 L515 360 M515 360 L525 364 M515 360 L515 383 M508 415 L534 402 M508 415 L515 426 M505 451 L532 446 M505 451 L510 473 M505 451 L532 473 M510 473 L504 493 M510 473 L539 491 M504 493 L538 527 M503 542 L536 546 M515 579 L512 608 M512 608 L539 602 M534 142 L559 152 M531 168 L547 165 M531 168 L531 192 M531 210 L560 207 M531 210 L524 235 M532 251 L554 262 M532 251 L536 281 M532 251 L549 273 M536 281 L549 273 M536 281 L531 294 M531 294 L554 296 M532 315 L526 342 M526 342 L525 364 M525 364 L557 371 M525 364 L532 380 M532 380 L549 392 M532 380 L534 402 M534 402 L548 409 M536 435 L532 446 M532 446 L560 454 M532 446 L555 481 M532 473 L555 481 M532 473 L548 505 M539 491 L538 527 M538 527 L556 517 M536 546 L527 571 M527 571 L532 592 M527 571 L552 589 M532 592 L539 602 M539 602 L553 602 M559 152 L580 138 M559 152 L547 165 M547 165 L558 184 M558 184 L578 197 M560 207 L577 214 M560 207 L559 227 M559 227 L573 225 M554 262 L569 249 M549 273 L554 296 M554 296 L576 305 M554 296 L570 317 M549 350 L578 335 M549 350 L557 371 M557 371 L568 363 M557 371 L549 392 M557 371 L570 385 M549 392 L570 385 M548 409 L556 429 M556 429 L577 426 M560 454 L555 481 M555 481 L570 482 M548 505 L556 517 M559 537 L582 546 M559 537 L562 564 M562 564 L568 587 M552 589 L553 602 M580 138 L600 144 M581 163 L605 171 M581 163 L578 197 M578 197 L594 195 M578 197 L591 212 M577 214 L573 225 M577 214 L596 229 M573 225 L569 249 M578 276 L590 278 M578 276 L576 305 M578 276 L605 293 M576 305 L570 317 M570 317 L593 323 M570 317 L578 335 M578 335 L598 345 M578 335 L568 363 M568 363 L603 360 M570 385 L595 384 M570 385 L572 410 M570 385 L591 415 M572 410 L577 426 M577 426 L603 434 M577 426 L578 453 M578 453 L590 459 M578 453 L570 482 M570 482 L602 474 M570 482 L572 491 M572 491 L602 496 M572 491 L570 521 M572 491 L594 513 M570 521 L582 546 M582 546 L594 534 M568 587 L601 591 M568 587 L601 603 M577 605 L601 603 M600 144 L621 144 M600 144 L605 171 M605 171 L625 167 M605 171 L616 191 M594 195 L591 212 M591 212 L626 225 M596 229 L626 225 M591 259 L616 251 M590 278 L605 293 M605 293 L624 296 M605 293 L626 318 M593 323 L598 345 M598 345 L616 350 M598 345 L603 360 M603 360 L595 384 M595 384 L623 395 M595 384 L591 415 M595 384 L620 414 M591 415 L620 414 M603 434 L590 459 M602 474 L602 496 M602 496 L613 526 M594 513 L594 534 M594 513 L614 533 M595 567 L614 570 M621 144 L625 167 M616 191 L627 206 M627 206 L640 216 M626 225 L647 239 M626 225 L635 261 M616 251 L635 261 M616 251 L624 284 M616 251 L649 284 M624 284 L649 284 M624 296 L626 318 M616 350 L622 368 M616 350 L644 370 M620 414 L636 403 M620 414 L623 437 M620 414 L646 426 M623 437 L646 426 M619 457 L621 472 M621 472 L634 471 M621 472 L615 499 M615 499 L613 526 M615 499 L640 516 M613 526 L640 516 M614 533 L648 565 M614 570 L618 579 M618 579 L634 584 M618 579 L612 600 M612 600 L641 611 M645 147 L662 148 M645 171 L635 190 M635 190 L640 216 M640 216 L669 206 M640 216 L656 228 M647 239 L656 228 M647 239 L635 261 M647 239 L668 263 M635 261 L649 284 M649 284 L656 277 M649 284 L636 294 M649 284 L664 304 M636 314 L659 321 M648 348 L644 370 M644 370 L660 372 M636 403 L667 409 M646 426 L658 433 M646 426 L639 452 M639 452 L657 458 M634 471 L639 500 M640 516 L662 517 M640 516 L649 541 M640 516 L670 534 M649 541 L670 555 M648 565 L659 581 M634 584 L659 581 M641 611 L670 607 M662 148 L665 162 M665 162 L682 166 M656 228 L684 230 M656 228 L668 263 M656 277 L689 281 M656 277 L664 304 M664 304 L681 298 M664 304 L690 322 M659 321 L690 322 M659 321 L662 348 M662 348 L680 342 M660 372 L692 361 M660 372 L661 382 M661 382 L681 384 M661 382 L667 409 M667 409 L689 414 M667 409 L658 433 M658 433 L680 425 M657 458 L682 450 M666 495 L683 492 M666 495 L662 517 M662 517 L694 523 M670 534 L670 555 M670 555 L659 581 M659 581 L670 607 M670 607 L690 606 M682 166 L687 193 M682 166 L706 182 M687 193 L706 182 M687 193 L690 213 M690 213 L684 230 M684 230 L711 233 M684 230 L680 260 M689 281 L681 298 M681 298 L690 322 M690 322 L680 342 M690 322 L709 347 M680 342 L692 361 M692 361 L712 393 M681 384 L712 393 M681 384 L689 414 M689 414 L712 412 M680 425 L682 450 M682 450 L710 452 M686 470 L683 492 M683 492 L694 523 M680 548 L707 562 M694 590 L710 584 M694 590 L690 606 M703 147 L725 147 M703 147 L702 162 M703 147 L734 165 M702 162 L734 165 M706 182 L706 216 M706 216 L723 212 M711 233 L725 238 M711 233 L737 255 M710 254 L737 255 M710 254 L702 279 M702 279 L731 302 M706 303 L715 320 M706 303 L730 323 M715 320 L709 347 M709 347 L707 361 M707 361 L729 372 M712 393 L725 390 M712 393 L712 412 M712 412 L728 413 M712 412 L714 434 M714 434 L724 439 M710 452 L705 477 M705 477 L702 496 M713 522 L729 522 M713 522 L728 537 M710 537 L728 537 M710 537 L707 562 M710 584 L737 585 M710 584 L711 614 M711 614 L726 612 M725 147 L750 140 M734 165 L746 171 M734 165 L730 197 M730 197 L757 191 M730 197 L723 212 M737 255 L724 278 M737 255 L757 282 M724 278 L757 282 M731 302 L730 323 M730 323 L753 315 M735 343 L757 341 M735 343 L729 372 M735 343 L758 361 M729 372 L758 361 M725 390 L750 383 M725 390 L728 413 M725 390 L751 404 M728 413 L751 404 M728 446 L748 449 M728 446 L749 475 M726 473 L749 475 M722 496 L751 499 M722 496 L729 522 M722 496 L755 517 M728 537 L726 567 M726 567 L745 568 M737 585 L758 590 M737 585 L726 612 M737 585 L746 612 M750 140 L776 137 M750 140 L746 171 M746 171 L757 191 M746 171 L776 185 M757 191 L752 212 M757 191 L768 205 M752 212 L768 205 M748 240 L770 237 M748 240 L772 249 M750 257 L772 249 M757 282 L780 282 M757 282 L769 305 M751 296 L769 305 M751 296 L753 315 M757 341 L777 349 M757 341 L779 370 M758 361 L779 370 M758 361 L750 383 M750 383 L751 404 M751 404 L744 435 M751 404 L773 437 M744 435 L775 449 M748 449 L775 449 M748 449 L770 469 M749 475 L770 469 M751 499 L773 513 M755 517 L773 513 M759 547 L774 541 M759 547 L745 568 M759 547 L775 569 M745 568 L758 590 M746 612 L773 608 M776 137 L799 150 M776 137 L766 174 M766 174 L794 166 M776 185 L803 182 M776 185 L798 213 M768 205 L798 213 M768 205 L770 237 M770 237 L799 262 M780 282 L793 285 M769 305 L776 326 M769 305 L802 314 M776 326 L802 314 M776 326 L777 349 M777 349 L799 345 M777 349 L793 371 M769 390 L794 387 M769 390 L796 413 M774 413 L796 413 M774 413 L773 437 M773 437 L791 430 M773 437 L775 449 M773 437 L795 454 M770 469 L801 472 M770 469 L774 490 M774 490 L773 513 M773 513 L796 549 M774 541 L796 549 M774 541 L775 569 M775 569 L766 590 M766 590 L793 582 M794 166 L824 190 M798 213 L788 235 M788 235 L810 228 M799 262 L825 257 M799 262 L793 285 M793 285 L821 282 M793 285 L796 299 M799 345 L821 345 M799 345 L793 371 M793 371 L821 360 M793 371 L794 387 M794 387 L796 413 M791 430 L813 424 M791 430 L795 454 M795 454 L822 460 M801 472 L820 473 M801 472 L823 502 M801 495 L823 502 M796 515 L796 549 M796 549 L815 562 M798 568 L815 562 M798 568 L793 582 M793 582 L820 592 M793 582 L793 608 M820 150 L833 139 M820 150 L811 171 M824 190 L847 188 M824 190 L811 208 M824 190 L832 209 M811 208 L810 228 M821 282 L839 271 M821 282 L825 301 M821 282 L842 294 M825 301 L842 294 M825 301 L820 323 M825 301 L834 313 M820 323 L834 313 M820 323 L821 345 M821 345 L821 360 M821 360 L834 372 M821 360 L821 386 M821 386 L833 393 M822 403 L813 424 M813 424 L844 427 M813 424 L844 448 M822 460 L820 473 M823 502 L843 503 M823 502 L819 515 M819 515 L844 512 M815 540 L815 562 M815 540 L839 570 M815 562 L839 570 M820 592 L843 599 M811 608 L843 599 M833 139 L854 147 M833 139 L867 160 M845 168 L847 188 M847 188 L859 193 M832 209 L857 217 M832 209 L841 240 M832 209 L862 226 M841 240 L862 226 M848 255 L860 256 M848 255 L861 280 M839 271 L861 280 M839 271 L842 294 M842 294 L856 304 M834 313 L832 346 M832 346 L834 372 M832 346 L860 370 M834 372 L860 370 M834 372 L833 393 M833 393 L834 401 M833 393 L863 406 M834 401 L863 406 M834 401 L844 427 M834 401 L855 439 M844 427 L855 439 M844 427 L844 448 M844 427 L865 458 M844 448 L865 458 M844 448 L833 479 M833 479 L843 503 M833 479 L870 502 M844 512 L861 547 M842 544 L839 570 M842 544 L860 566 M839 570 L860 566 M839 570 L864 591 M836 592 L864 591 M836 592 L843 599 M843 599 L867 604 M854 147 L867 160 M867 160 L883 168 M867 160 L859 193 M859 193 L889 195 M859 193 L857 217 M857 217 L877 216 M857 217 L862 226 M857 217 L889 239 M862 226 L860 256 M862 226 L885 251 M860 256 L885 251 M861 280 L890 282 M861 280 L856 304 M856 304 L860 323 M864 342 L885 348 M864 342 L879 369 M860 370 L879 369 M869 392 L891 383 M869 392 L863 406 M869 392 L886 412 M863 406 L886 412 M863 406 L855 439 M863 406 L883 426 M865 458 L880 457 M865 458 L889 474 M859 477 L870 502 M870 502 L877 502 M864 516 L885 547 M861 547 L860 566 M860 566 L890 563 M860 566 L864 591 M864 591 L884 586 M864 591 L867 604 M876 141 L901 148 M876 141 L883 168 M876 141 L904 168 M883 168 L889 195 M889 195 L904 189 M889 195 L877 216 M877 216 L889 239 M877 216 L914 231 M889 239 L914 231 M889 239 L900 257 M885 251 L900 257 M885 251 L890 282 M890 282 L887 306 M890 282 L908 297 M887 306 L908 297 M882 314 L906 313 M879 369 L891 383 M879 369 L907 383 M891 383 L886 412 M891 383 L910 408 M886 412 L910 408 M886 412 L883 426 M883 426 L880 457 M889 474 L902 468 M889 474 L877 502 M889 474 L901 492 M888 515 L907 547 M885 547 L907 547 M890 563 L905 570 M884 586 L913 578 M884 586 L879 602 M901 148 L904 168 M900 204 L914 231 M911 271 L908 297 M908 297 L906 313 M907 383 L910 408 M911 460 L902 468 M902 468 L901 492 M899 512 L907 547 M907 547 L905 570"/>
</g>
<g fill="none" stroke="#8f93ad" stroke-width="1" stroke-linejoin="round">
<path d="M387 147 L381 160 L371 166 L358 165 L356 173 L369 177 L361 187 L349 187 L339 196 L349 209 L359 219 L371 229 L391 235 L398 229 L406 221 L405 211 L413 202 L420 204 L425 213 L436 228 L440 239 L445 243"/>
<path d="M686 342 L702 370 L677 376 L680 406 L671 421 L686 440 L677 461 L686 480 L705 489 L708 513"/>
</g>
<g fill="none" stroke="#f2a571" stroke-width="1.3" stroke-linejoin="round">
<path d="M262 332 L292 330 L320 330 L350 324 L380 318 L420 315 L458 310 L472 305"/>
<path d="M472 305 L440 325 L400 345 L370 365 L340 385 L318 398 L304 400"/>
<path d="M292 330 L296 360 L295 385 L304 400"/>
<path d="M472 310 L450 335 L425 365 L398 395 L370 420 L345 450 L330 475 L318 482"/>
<path d="M472 312 L455 340 L440 380 L425 410 L410 440"/>
<path d="M472 305 L474 280 L470 255 L460 230 L465 200 L480 188"/>
<path d="M480 188 L500 182"/>
<path d="M468 196 L440 180 L420 170"/>
<path d="M694 147 L700 180 L706 225 L702 260 L705 285 L718 305 L725 320 L735 345 L740 370 L742 400 L758 420"/>
<path d="M785 148 L781 175 L781 200 L790 225 L800 250 L812 290 L815 330 L820 360 L835 395 L856 410 L862 440 L868 480 L872 525"/>
<path d="M790 275 L798 312 L808 360 L812 395 L826 440 L850 500 L870 525"/>
<path d="M680 312 L720 312 L760 290 L790 275 L830 272 L860 275 L884 275"/>
<path d="M872 530 L830 525 L780 515 L740 522 L720 525 L690 522 L660 517 L625 511"/>
<path d="M872 528 L835 510 L800 492 L780 465 L765 430"/>
<path d="M758 425 L745 455 L737 480 L728 505 L720 525 L705 550 L690 572 L672 590 L660 602"/>
<path d="M660 602 L640 610 L620 618"/>
<path d="M872 530 L880 560 L878 598"/>
<path d="M872 530 L840 560 L815 590"/>
<path d="M872 530 L910 510"/>
<path d="M742 400 L720 395 L700 390"/>
<path d="M705 285 L690 290 L680 300"/>
</g>
<g fill="#fff" stroke="#444" stroke-width="0.9">
<rect x="452" y="189.5" width="15" height="10" rx="2"/>
<rect x="312" y="325.5" width="14" height="10" rx="2"/>
<rect x="783.5" y="452.5" width="18" height="10" rx="2"/>
</g>
<g font-size="7.5" font-weight="bold" fill="#333">
<text x="454.5" y="197.5" textLength="10" lengthAdjust="spacingAndGlyphs">M1</text>
<text x="314" y="333.5" textLength="10" lengthAdjust="spacingAndGlyphs">M6</text>
<text x="785.5" y="460.5" textLength="14" lengthAdjust="spacingAndGlyphs">M40</text>
</g>
<g fill="#222">
<circle cx="342.0" cy="175.0" r="1.3"/>
<circle cx="330.5" cy="195.0" r="1.3"/>
<circle cx="373.5" cy="210.6" r="1.3"/>
<circle cx="488.2" cy="195.0" r="1.3"/>
<circle cx="461.2" cy="229.0" r="1.3"/>
<circle cx="317.3" cy="219.0" r="1.3"/>
<circle cx="216.6" cy="224.5" r="1.3"/>
<circle cx="272.2" cy="237.0" r="1.3"/>
<circle cx="343.5" cy="256.8" r="1.3"/>
<circle cx="392.2" cy="251.3" r="1.3"/>
<circle cx="456.5" cy="249.3" r="1.3"/>
<circle cx="460.5" cy="282.6" r="1.3"/>
<circle cx="316.5" cy="276.5" r="1.3"/>
<circle cx="363.0" cy="281.3" r="1.3"/>
<circle cx="267.6" cy="293.0" r="1.3"/>
<circle cx="393.9" cy="304.0" r="1.3"/>
<circle cx="214.1" cy="308.0" r="1.3"/>
<circle cx="316.3" cy="310.4" r="1.3"/>
<circle cx="279.4" cy="331.6" r="1.3"/>
<circle cx="430.3" cy="343.0" r="1.3"/>
<circle cx="262.8" cy="369.4" r="1.3"/>
<circle cx="421.7" cy="380.7" r="1.3"/>
<circle cx="250.2" cy="403.0" r="1.3"/>
<circle cx="307.4" cy="399.8" r="1.3"/>
<circle cx="362.0" cy="398.5" r="1.3"/>
<circle cx="400.4" cy="401.7" r="1.3"/>
<circle cx="278.8" cy="423.0" r="1.3"/>
<circle cx="338.8" cy="421.4" r="1.3"/>
<circle cx="408.5" cy="443.8" r="1.3"/>
<circle cx="452.9" cy="436.0" r="1.3"/>
<circle cx="197.2" cy="457.7" r="1.3"/>
<circle cx="248.9" cy="466.7" r="1.3"/>
<circle cx="318.1" cy="483.8" r="1.3"/>
<circle cx="359.2" cy="478.7" r="1.3"/>
<circle cx="203.6" cy="492.0" r="1.3"/>
<circle cx="252.4" cy="508.0" r="1.3"/>
<circle cx="645.3" cy="187.4" r="1.3"/>
<circle cx="858.8" cy="217.7" r="1.3"/>
<circle cx="813.6" cy="253.9" r="1.3"/>
<circle cx="863.5" cy="278.4" r="1.3"/>
<circle cx="782.8" cy="272.6" r="1.3"/>
<circle cx="681.1" cy="271.0" r="1.3"/>
<circle cx="686.5" cy="316.8" r="1.3"/>
<circle cx="735.9" cy="323.0" r="1.3"/>
<circle cx="787.5" cy="319.7" r="1.3"/>
<circle cx="575.6" cy="328.4" r="1.3"/>
<circle cx="609.5" cy="336.8" r="1.3"/>
<circle cx="692.0" cy="340.7" r="1.3"/>
<circle cx="850.1" cy="335.9" r="1.3"/>
<circle cx="739.9" cy="360.4" r="1.3"/>
<circle cx="808.9" cy="367.5" r="1.3"/>
<circle cx="590.1" cy="375.2" r="1.3"/>
<circle cx="614.5" cy="394.0" r="1.3"/>
<circle cx="743.5" cy="408.5" r="1.3"/>
<circle cx="810.1" cy="402.7" r="1.3"/>
<circle cx="869.8" cy="409.8" r="1.3"/>
<circle cx="664.0" cy="416.9" r="1.3"/>
<circle cx="759.5" cy="434.8" r="1.3"/>
<circle cx="573.4" cy="464.0" r="1.3"/>
<circle cx="642.4" cy="461.6" r="1.3"/>
<circle cx="704.2" cy="466.4" r="1.3"/>
<circle cx="597.0" cy="488.7" r="1.3"/>
<circle cx="735.5" cy="487.0" r="1.3"/>
<circle cx="802.2" cy="499.3" r="1.3"/>
<circle cx="863.2" cy="500.0" r="1.3"/>
<circle cx="621.2" cy="513.5" r="1.3"/>
<circle cx="766.2" cy="520.3" r="1.3"/>
<circle cx="673.4" cy="528.4" r="1.3"/>
<circle cx="821.2" cy="532.3" r="1.3"/>
<circle cx="877.5" cy="542.0" r="1.3"/>
<circle cx="728.1" cy="539.4" r="1.3"/>
<circle cx="733.8" cy="571.6" r="1.3"/>
<circle cx="766.0" cy="572.6" r="1.3"/>
<circle cx="678.0" cy="579.0" r="1.3"/>
<circle cx="649.9" cy="609.4" r="1.3"/>
<circle cx="813.9" cy="601.0" r="1.3"/>
<circle cx="877.4" cy="599.0" r="1.3"/>
<circle cx="760.7" cy="610.4" r="1.3"/>
<circle cx="807.9" cy="620.0" r="1.3"/>
</g>
<text x="0" y="0" font-size="11" font-style="italic" fill="#fff" opacity="0.45" transform="translate(533 392) rotate(-62)" textLength="50" lengthAdjust="spacingAndGlyphs">Irish Sea</text>
<g>
<text x="401" y="160.2" font-size="9" font-weight="bold" fill="#3a3a3a" textLength="45.0" lengthAdjust="spacingAndGlyphs" stroke="rgba(255,255,255,0.7)" stroke-width="2" paint-order="stroke">NORTHERN</text>
<text x="404" y="168.7" font-size="9" font-weight="bold" fill="#3a3a3a" textLength="39.0" lengthAdjust="spacingAndGlyphs" stroke="rgba(255,255,255,0.7)" stroke-width="2" paint-order="stroke">IRELAND</text>
<text x="327" y="171.2" font-size="9" font-weight="normal" fill="#3a3a3a" textLength="30.0" lengthAdjust="spacingAndGlyphs" stroke="rgba(255,255,255,0.7)" stroke-width="2" paint-order="stroke">Donegal</text>
<text x="312" y="191.2" font-size="9" font-weight="normal" fill="#3a3a3a" textLength="37.0" lengthAdjust="spacingAndGlyphs" stroke="rgba(255,255,255,0.7)" stroke-width="2" paint-order="stroke">Bundoran</text>
<text x="353" y="206.8" font-size="9" font-weight="normal" fill="#3a3a3a" textLength="41.0" lengthAdjust="spacingAndGlyphs" stroke="rgba(255,255,255,0.7)" stroke-width="2" paint-order="stroke">Enniskillen</text>
<text x="472.5" y="192.0" font-size="11" font-weight="normal" fill="#3a3a3a" textLength="31.5" lengthAdjust="spacingAndGlyphs" stroke="rgba(255,255,255,0.7)" stroke-width="2" paint-order="stroke">Belfast</text>
<text x="449" y="225.2" font-size="9" font-weight="normal" fill="#3a3a3a" textLength="24.5" lengthAdjust="spacingAndGlyphs" stroke="rgba(255,255,255,0.7)" stroke-width="2" paint-order="stroke">Newry</text>
<text x="308" y="215.2" font-size="9" font-weight="normal" fill="#3a3a3a" textLength="18.6" lengthAdjust="spacingAndGlyphs" stroke="rgba(255,255,255,0.7)" stroke-width="2" paint-order="stroke">Sligo</text>
<text x="198.5" y="220.7" font-size="9" font-weight="normal" fill="#3a3a3a" textLength="36.2" lengthAdjust="spacingAndGlyphs" stroke="rgba(255,255,255,0.7)" stroke-width="2" paint-order="stroke">Belmullet</text>
<text x="259.5" y="233.2" font-size="9" font-weight="normal" fill="#3a3a3a" textLength="25.5" lengthAdjust="spacingAndGlyphs" stroke="rgba(255,255,255,0.7)" stroke-width="2" paint-order="stroke">Ballina</text>
<text x="322" y="242.6" font-size="9" font-weight="normal" fill="#3a3a3a" textLength="42.0" lengthAdjust="spacingAndGlyphs" stroke="rgba(255,255,255,0.7)" stroke-width="2" paint-order="stroke">Carrick-on-</text>
<text x="328" y="253.0" font-size="9" font-weight="normal" fill="#3a3a3a" textLength="31.0" lengthAdjust="spacingAndGlyphs" stroke="rgba(255,255,255,0.7)" stroke-width="2" paint-order="stroke">Shannon</text>
<text x="381.5" y="247.5" font-size="9" font-weight="normal" fill="#3a3a3a" textLength="21.5" lengthAdjust="spacingAndGlyphs" stroke="rgba(255,255,255,0.7)" stroke-width="2" paint-order="stroke">Cavan</text>
<text x="441" y="245.5" font-size="9" font-weight="normal" fill="#3a3a3a" textLength="31.0" lengthAdjust="spacingAndGlyphs" stroke="rgba(255,255,255,0.7)" stroke-width="2" paint-order="stroke">Dundalk</text>
<text x="443" y="278.8" font-size="9" font-weight="normal" fill="#3a3a3a" textLength="35.0" lengthAdjust="spacingAndGlyphs" stroke="rgba(255,255,255,0.7)" stroke-width="2" paint-order="stroke">Drogheda</text>
<text x="299" y="272.7" font-size="9" font-weight="normal" fill="#3a3a3a" textLength="35.0" lengthAdjust="spacingAndGlyphs" stroke="rgba(255,255,255,0.7)" stroke-width="2" paint-order="stroke">Castlerea</text>
<text x="347" y="277.5" font-size="9" font-weight="normal" fill="#3a3a3a" textLength="32.0" lengthAdjust="spacingAndGlyphs" stroke="rgba(255,255,255,0.7)" stroke-width="2" paint-order="stroke">Longford</text>
<text x="248.5" y="289.2" font-size="9" font-weight="normal" fill="#3a3a3a" textLength="38.1" lengthAdjust="spacingAndGlyphs" stroke="rgba(255,255,255,0.7)" stroke-width="2" paint-order="stroke">Ballinrobe</text>
<text x="376.7" y="300.2" font-size="9" font-weight="normal" fill="#3a3a3a" textLength="34.3" lengthAdjust="spacingAndGlyphs" stroke="rgba(255,255,255,0.7)" stroke-width="2" paint-order="stroke">Mullingar</text>
<text x="201.7" y="304.2" font-size="9" font-weight="normal" fill="#3a3a3a" textLength="24.9" lengthAdjust="spacingAndGlyphs" stroke="rgba(255,255,255,0.7)" stroke-width="2" paint-order="stroke">Clifden</text>
<text x="293" y="306.6" font-size="9" font-weight="normal" fill="#3a3a3a" textLength="46.6" lengthAdjust="spacingAndGlyphs" stroke="rgba(255,255,255,0.7)" stroke-width="2" paint-order="stroke">Mountbellew</text>
<text x="266" y="327.8" font-size="9" font-weight="normal" fill="#3a3a3a" textLength="26.8" lengthAdjust="spacingAndGlyphs" stroke="rgba(255,255,255,0.7)" stroke-width="2" paint-order="stroke">Galway</text>
<text x="340.5" y="335.0" font-size="18" font-weight="bold" fill="#1a1a1a" textLength="53.3" lengthAdjust="spacingAndGlyphs" stroke="rgba(255,255,255,0.7)" stroke-width="2" paint-order="stroke">Ireland</text>
<text x="410.6" y="339.2" font-size="9" font-weight="normal" fill="#3a3a3a" textLength="39.4" lengthAdjust="spacingAndGlyphs" stroke="rgba(255,255,255,0.7)" stroke-width="2" paint-order="stroke">Newbridge</text>
<text x="241.8" y="365.6" font-size="9" font-weight="normal" fill="#3a3a3a" textLength="41.9" lengthAdjust="spacingAndGlyphs" stroke="rgba(255,255,255,0.7)" stroke-width="2" paint-order="stroke">Ennistymon</text>
<text x="408.6" y="376.9" font-size="9" font-weight="normal" fill="#3a3a3a" textLength="26.2" lengthAdjust="spacingAndGlyphs" stroke="rgba(255,255,255,0.7)" stroke-width="2" paint-order="stroke">Carlow</text>
<text x="237" y="399.2" font-size="9" font-weight="normal" fill="#3a3a3a" textLength="26.4" lengthAdjust="spacingAndGlyphs" stroke="rgba(255,255,255,0.7)" stroke-width="2" paint-order="stroke">Kilrush</text>
<text x="290.5" y="396.0" font-size="9" font-weight="normal" fill="#3a3a3a" textLength="33.9" lengthAdjust="spacingAndGlyphs" stroke="rgba(255,255,255,0.7)" stroke-width="2" paint-order="stroke">Limerick</text>
<text x="348" y="394.7" font-size="9" font-weight="normal" fill="#3a3a3a" textLength="28.0" lengthAdjust="spacingAndGlyphs" stroke="rgba(255,255,255,0.7)" stroke-width="2" paint-order="stroke">Thurles</text>
<text x="384.7" y="397.9" font-size="9" font-weight="normal" fill="#3a3a3a" textLength="31.3" lengthAdjust="spacingAndGlyphs" stroke="rgba(255,255,255,0.7)" stroke-width="2" paint-order="stroke">Kilkenny</text>
<text x="250.5" y="419.2" font-size="9" font-weight="normal" fill="#3a3a3a" textLength="56.5" lengthAdjust="spacingAndGlyphs" stroke="rgba(255,255,255,0.7)" stroke-width="2" paint-order="stroke">Newcastle West</text>
<text x="321.5" y="417.6" font-size="9" font-weight="normal" fill="#3a3a3a" textLength="34.5" lengthAdjust="spacingAndGlyphs" stroke="rgba(255,255,255,0.7)" stroke-width="2" paint-order="stroke">Tipperary</text>
<text x="390" y="440.0" font-size="9" font-weight="normal" fill="#3a3a3a" textLength="37.0" lengthAdjust="spacingAndGlyphs" stroke="rgba(255,255,255,0.7)" stroke-width="2" paint-order="stroke">Waterford</text>
<text x="438" y="432.2" font-size="9" font-weight="normal" fill="#3a3a3a" textLength="29.7" lengthAdjust="spacingAndGlyphs" stroke="rgba(255,255,255,0.7)" stroke-width="2" paint-order="stroke">Wexford</text>
<text x="185.6" y="453.9" font-size="9" font-weight="normal" fill="#3a3a3a" textLength="23.2" lengthAdjust="spacingAndGlyphs" stroke="rgba(255,255,255,0.7)" stroke-width="2" paint-order="stroke">Dingle</text>
<text x="232.4" y="462.9" font-size="9" font-weight="normal" fill="#3a3a3a" textLength="32.9" lengthAdjust="spacingAndGlyphs" stroke="rgba(255,255,255,0.7)" stroke-width="2" paint-order="stroke">Killarney</text>
<text x="309.5" y="480.0" font-size="9" font-weight="normal" fill="#3a3a3a" textLength="17.1" lengthAdjust="spacingAndGlyphs" stroke="rgba(255,255,255,0.7)" stroke-width="2" paint-order="stroke">Cork</text>
<text x="345" y="474.9" font-size="9" font-weight="normal" fill="#3a3a3a" textLength="28.5" lengthAdjust="spacingAndGlyphs" stroke="rgba(255,255,255,0.7)" stroke-width="2" paint-order="stroke">Youghal</text>
<text x="185.6" y="488.2" font-size="9" font-weight="normal" fill="#3a3a3a" textLength="36.1" lengthAdjust="spacingAndGlyphs" stroke="rgba(255,255,255,0.7)" stroke-width="2" paint-order="stroke">Waterville</text>
<text x="240.8" y="504.2" font-size="9" font-weight="normal" fill="#3a3a3a" textLength="23.2" lengthAdjust="spacingAndGlyphs" stroke="rgba(255,255,255,0.7)" stroke-width="2" paint-order="stroke">Bantry</text>
<text x="624.6" y="183.6" font-size="9" font-weight="normal" fill="#3a3a3a" textLength="41.4" lengthAdjust="spacingAndGlyphs" stroke="rgba(255,255,255,0.7)" stroke-width="2" paint-order="stroke">Whitehaven</text>
<text x="555" y="228.0" font-size="13" font-weight="bold" fill="#1a1a1a" textLength="55.4" lengthAdjust="spacingAndGlyphs" stroke="rgba(255,255,255,0.7)" stroke-width="2" paint-order="stroke">Isle of Man</text>
<text x="703" y="218.5" font-size="18" font-weight="bold" fill="#1a1a1a" textLength="48.5" lengthAdjust="spacingAndGlyphs" stroke="rgba(255,255,255,0.7)" stroke-width="2" paint-order="stroke">United</text>
<text x="694" y="239.8" font-size="18" font-weight="bold" fill="#1a1a1a" textLength="66.5" lengthAdjust="spacingAndGlyphs" stroke="rgba(255,255,255,0.7)" stroke-width="2" paint-order="stroke">Kingdom</text>
<text x="835.4" y="213.9" font-size="9" font-weight="normal" fill="#3a3a3a" textLength="46.8" lengthAdjust="spacingAndGlyphs" stroke="rgba(255,255,255,0.7)" stroke-width="2" paint-order="stroke">Scarborough</text>
<text x="804.7" y="250.1" font-size="9" font-weight="normal" fill="#3a3a3a" textLength="17.8" lengthAdjust="spacingAndGlyphs" stroke="rgba(255,255,255,0.7)" stroke-width="2" paint-order="stroke">York</text>
<text x="847.4" y="264.2" font-size="9" font-weight="normal" fill="#3a3a3a" textLength="33.2" lengthAdjust="spacingAndGlyphs" stroke="rgba(255,255,255,0.7)" stroke-width="2" paint-order="stroke">Kingston</text>
<text x="845.4" y="274.6" font-size="9" font-weight="normal" fill="#3a3a3a" textLength="36.2" lengthAdjust="spacingAndGlyphs" stroke="rgba(255,255,255,0.7)" stroke-width="2" paint-order="stroke">upon Hull</text>
<text x="771.5" y="269.2" font-size="10" font-weight="normal" fill="#3a3a3a" textLength="22.5" lengthAdjust="spacingAndGlyphs" stroke="rgba(255,255,255,0.7)" stroke-width="2" paint-order="stroke">Leeds</text>
<text x="663.4" y="267.2" font-size="9" font-weight="normal" fill="#3a3a3a" textLength="35.5" lengthAdjust="spacingAndGlyphs" stroke="rgba(255,255,255,0.7)" stroke-width="2" paint-order="stroke">Blackpool</text>
<text x="668.9" y="313.4" font-size="10" font-weight="normal" fill="#3a3a3a" textLength="35.1" lengthAdjust="spacingAndGlyphs" stroke="rgba(255,255,255,0.7)" stroke-width="2" paint-order="stroke">Liverpool</text>
<text x="710.5" y="320.0" font-size="11" font-weight="normal" fill="#3a3a3a" textLength="50.7" lengthAdjust="spacingAndGlyphs" stroke="rgba(255,255,255,0.7)" stroke-width="2" paint-order="stroke">Manchester</text>
<text x="771" y="316.3" font-size="10" font-weight="normal" fill="#3a3a3a" textLength="33.0" lengthAdjust="spacingAndGlyphs" stroke="rgba(255,255,255,0.7)" stroke-width="2" paint-order="stroke">Sheffield</text>
<text x="558.8" y="324.6" font-size="9" font-weight="normal" fill="#3a3a3a" textLength="33.6" lengthAdjust="spacingAndGlyphs" stroke="rgba(255,255,255,0.7)" stroke-width="2" paint-order="stroke">Holyhead</text>
<text x="595.6" y="333.0" font-size="9" font-weight="normal" fill="#3a3a3a" textLength="27.7" lengthAdjust="spacingAndGlyphs" stroke="rgba(255,255,255,0.7)" stroke-width="2" paint-order="stroke">Bangor</text>
<text x="677" y="336.9" font-size="9" font-weight="normal" fill="#3a3a3a" textLength="30.0" lengthAdjust="spacingAndGlyphs" stroke="rgba(255,255,255,0.7)" stroke-width="2" paint-order="stroke">Chester</text>
<text x="836.4" y="332.1" font-size="9" font-weight="normal" fill="#3a3a3a" textLength="27.4" lengthAdjust="spacingAndGlyphs" stroke="rgba(255,255,255,0.7)" stroke-width="2" paint-order="stroke">Lincoln</text>
<text x="890" y="321.2" font-size="9" font-weight="normal" fill="#3a3a3a" textLength="30.0" lengthAdjust="spacingAndGlyphs" stroke="rgba(255,255,255,0.7)" stroke-width="2" paint-order="stroke">Mablethorpe</text>
<text x="710.5" y="356.6" font-size="9" font-weight="normal" fill="#3a3a3a" textLength="58.7" lengthAdjust="spacingAndGlyphs" stroke="rgba(255,255,255,0.7)" stroke-width="2" paint-order="stroke">Stoke-on-Trent</text>
<text x="786.6" y="363.7" font-size="9" font-weight="normal" fill="#3a3a3a" textLength="44.6" lengthAdjust="spacingAndGlyphs" stroke="rgba(255,255,255,0.7)" stroke-width="2" paint-order="stroke">Nottingham</text>
<text x="575.6" y="371.4" font-size="9" font-weight="normal" fill="#3a3a3a" textLength="29.0" lengthAdjust="spacingAndGlyphs" stroke="rgba(255,255,255,0.7)" stroke-width="2" paint-order="stroke">Pwllheli</text>
<text x="596.2" y="390.2" font-size="9" font-weight="normal" fill="#3a3a3a" textLength="36.5" lengthAdjust="spacingAndGlyphs" stroke="rgba(255,255,255,0.7)" stroke-width="2" paint-order="stroke">Barmouth</text>
<text x="713.7" y="404.7" font-size="9" font-weight="normal" fill="#3a3a3a" textLength="59.7" lengthAdjust="spacingAndGlyphs" stroke="rgba(255,255,255,0.7)" stroke-width="2" paint-order="stroke">Wolverhampton</text>
<text x="792.8" y="398.9" font-size="9" font-weight="normal" fill="#3a3a3a" textLength="34.6" lengthAdjust="spacingAndGlyphs" stroke="rgba(255,255,255,0.7)" stroke-width="2" paint-order="stroke">Leicester</text>
<text x="843.5" y="406.0" font-size="9" font-weight="normal" fill="#3a3a3a" textLength="52.5" lengthAdjust="spacingAndGlyphs" stroke="rgba(255,255,255,0.7)" stroke-width="2" paint-order="stroke">Peterborough</text>
<text x="647.5" y="413.1" font-size="9" font-weight="normal" fill="#3a3a3a" textLength="33.0" lengthAdjust="spacingAndGlyphs" stroke="rgba(255,255,255,0.7)" stroke-width="2" paint-order="stroke">Newtown</text>
<text x="732" y="431.8" font-size="11" font-weight="normal" fill="#3a3a3a" textLength="55.0" lengthAdjust="spacingAndGlyphs" stroke="rgba(255,255,255,0.7)" stroke-width="2" paint-order="stroke">Birmingham</text>
<text x="811" y="434.7" font-size="11" font-weight="bold" fill="#1a1a1a" textLength="60.6" lengthAdjust="spacingAndGlyphs" stroke="rgba(255,255,255,0.7)" stroke-width="2" paint-order="stroke">ENGLAND</text>
<text x="627" y="440.8" font-size="11" font-weight="bold" fill="#1a1a1a" textLength="34.8" lengthAdjust="spacingAndGlyphs" stroke="rgba(255,255,255,0.7)" stroke-width="2" paint-order="stroke">WALES</text>
<text x="873.5" y="446.8" font-size="9" font-weight="normal" fill="#3a3a3a" textLength="41.0" lengthAdjust="spacingAndGlyphs" stroke="rgba(255,255,255,0.7)" stroke-width="2" paint-order="stroke">Cambridge</text>
<text x="556.8" y="460.2" font-size="9" font-weight="normal" fill="#3a3a3a" textLength="33.2" lengthAdjust="spacingAndGlyphs" stroke="rgba(255,255,255,0.7)" stroke-width="2" paint-order="stroke">Cardigan</text>
<text x="613.7" y="457.8" font-size="9" font-weight="normal" fill="#3a3a3a" textLength="57.3" lengthAdjust="spacingAndGlyphs" stroke="rgba(255,255,255,0.7)" stroke-width="2" paint-order="stroke">Llanwrtyd Wells</text>
<text x="687.6" y="462.6" font-size="9" font-weight="normal" fill="#3a3a3a" textLength="33.2" lengthAdjust="spacingAndGlyphs" stroke="rgba(255,255,255,0.7)" stroke-width="2" paint-order="stroke">Hereford</text>
<text x="515" y="481.7" font-size="9" font-weight="normal" fill="#3a3a3a" textLength="36.4" lengthAdjust="spacingAndGlyphs" stroke="rgba(255,255,255,0.7)" stroke-width="2" paint-order="stroke">St David's</text>
<text x="575" y="484.9" font-size="9" font-weight="normal" fill="#3a3a3a" textLength="44.0" lengthAdjust="spacingAndGlyphs" stroke="rgba(255,255,255,0.7)" stroke-width="2" paint-order="stroke">Carmarthen</text>
<text x="715.3" y="483.2" font-size="9" font-weight="normal" fill="#3a3a3a" textLength="40.4" lengthAdjust="spacingAndGlyphs" stroke="rgba(255,255,255,0.7)" stroke-width="2" paint-order="stroke">Gloucester</text>
<text x="790" y="495.5" font-size="9" font-weight="normal" fill="#3a3a3a" textLength="24.4" lengthAdjust="spacingAndGlyphs" stroke="rgba(255,255,255,0.7)" stroke-width="2" paint-order="stroke">Oxford</text>
<text x="845.4" y="496.2" font-size="9" font-weight="normal" fill="#3a3a3a" textLength="35.6" lengthAdjust="spacingAndGlyphs" stroke="rgba(255,255,255,0.7)" stroke-width="2" paint-order="stroke">St Albans</text>
<text x="604.6" y="509.7" font-size="9" font-weight="normal" fill="#3a3a3a" textLength="33.3" lengthAdjust="spacingAndGlyphs" stroke="rgba(255,255,255,0.7)" stroke-width="2" paint-order="stroke">Swansea</text>
<text x="751" y="516.5" font-size="9" font-weight="normal" fill="#3a3a3a" textLength="30.5" lengthAdjust="spacingAndGlyphs" stroke="rgba(255,255,255,0.7)" stroke-width="2" paint-order="stroke">Swindon</text>
<text x="660.5" y="524.6" font-size="9" font-weight="normal" fill="#3a3a3a" textLength="25.8" lengthAdjust="spacingAndGlyphs" stroke="rgba(255,255,255,0.7)" stroke-width="2" paint-order="stroke">Cardiff</text>
<text x="806.7" y="528.5" font-size="9" font-weight="normal" fill="#3a3a3a" textLength="29.0" lengthAdjust="spacingAndGlyphs" stroke="rgba(255,255,255,0.7)" stroke-width="2" paint-order="stroke">Reading</text>
<text x="859" y="539.3" font-size="12" font-weight="normal" fill="#3a3a3a" textLength="37.0" lengthAdjust="spacingAndGlyphs" stroke="rgba(255,255,255,0.7)" stroke-width="2" paint-order="stroke">London</text>
<text x="719.2" y="535.6" font-size="9" font-weight="normal" fill="#3a3a3a" textLength="17.8" lengthAdjust="spacingAndGlyphs" stroke="rgba(255,255,255,0.7)" stroke-width="2" paint-order="stroke">Bath</text>
<text x="724.7" y="567.8" font-size="9" font-weight="normal" fill="#3a3a3a" textLength="18.1" lengthAdjust="spacingAndGlyphs" stroke="rgba(255,255,255,0.7)" stroke-width="2" paint-order="stroke">Mere</text>
<text x="748.3" y="568.8" font-size="9" font-weight="normal" fill="#3a3a3a" textLength="35.5" lengthAdjust="spacingAndGlyphs" stroke="rgba(255,255,255,0.7)" stroke-width="2" paint-order="stroke">Salisbury</text>
<text x="663.7" y="575.2" font-size="9" font-weight="normal" fill="#3a3a3a" textLength="28.7" lengthAdjust="spacingAndGlyphs" stroke="rgba(255,255,255,0.7)" stroke-width="2" paint-order="stroke">Taunton</text>
<text x="570.7" y="577.8" font-size="9" font-weight="normal" fill="#3a3a3a" textLength="30.7" lengthAdjust="spacingAndGlyphs" stroke="rgba(255,255,255,0.7)" stroke-width="2" paint-order="stroke">Hartland</text>
<text x="638" y="605.6" font-size="9" font-weight="normal" fill="#3a3a3a" textLength="23.8" lengthAdjust="spacingAndGlyphs" stroke="rgba(255,255,255,0.7)" stroke-width="2" paint-order="stroke">Exeter</text>
<text x="791.8" y="597.2" font-size="9" font-weight="normal" fill="#3a3a3a" textLength="44.2" lengthAdjust="spacingAndGlyphs" stroke="rgba(255,255,255,0.7)" stroke-width="2" paint-order="stroke">Portsmouth</text>
<text x="861.2" y="595.2" font-size="9" font-weight="normal" fill="#3a3a3a" textLength="32.3" lengthAdjust="spacingAndGlyphs" stroke="rgba(255,255,255,0.7)" stroke-width="2" paint-order="stroke">Brighton</text>
<text x="736" y="606.6" font-size="9" font-weight="normal" fill="#3a3a3a" textLength="49.4" lengthAdjust="spacingAndGlyphs" stroke="rgba(255,255,255,0.7)" stroke-width="2" paint-order="stroke">Bournemouth</text>
<text x="573" y="615.6" font-size="9" font-weight="normal" fill="#3a3a3a" textLength="41.3" lengthAdjust="spacingAndGlyphs" stroke="rgba(255,255,255,0.7)" stroke-width="2" paint-order="stroke">Launceston</text>
<text x="791.8" y="616.2" font-size="9" font-weight="normal" fill="#3a3a3a" textLength="32.2" lengthAdjust="spacingAndGlyphs" stroke="rgba(255,255,255,0.7)" stroke-width="2" paint-order="stroke">Shanklin</text>
</g>
</g>
</g>
<rect x="49" y="145" width="854" height="481" fill="none" stroke="#fff" stroke-width="3.8"/>
<g stroke="#000" stroke-width="3.8" stroke-dasharray="8 8">
<line x1="48" y1="145" x2="903" y2="145" stroke-dashoffset="1"/>
<line x1="48" y1="626" x2="903" y2="626" stroke-dashoffset="-0.7"/>
<line x1="49" y1="145" x2="49" y2="626" stroke-dashoffset="1.3"/>
<line x1="903" y1="145" x2="903" y2="626" stroke-dashoffset="-8.2"/>
</g>
<rect x="474.5" y="116" width="3" height="18" fill="#000"/>
<!-- ship -->
<g transform="translate(471.5 322) rotate(-26.5)">
<path d="M-1 -51 C-6 -44 -8 -36 -8 -26 L-8 47 Q-8 50 -5 50 L5 50 Q8 50 8 47 L8 -26 C8 -36 6 -44 1 -51 Z" fill="#f2f4f6" stroke="#7f93a8" stroke-width="1.1"/>
<path d="M-3 -42 L3 -42 M-5 -36 L5 -36" stroke="#c9d2dc" stroke-width="0.8"/>
<rect x="-5.5" y="-32" width="11" height="4.5" fill="#5d9dd4"/>
<rect x="-5.5" y="-27.5" width="11" height="9" fill="#b98350"/>
<rect x="-4" y="-25.5" width="2.6" height="2" fill="#fff"/><rect x="1.4" y="-25.5" width="2.6" height="2" fill="#fff"/>
<rect x="-4" y="-21.5" width="2.6" height="2" fill="#fff"/><rect x="1.4" y="-21.5" width="2.6" height="2" fill="#fff"/>
<path d="M-6.5 -6 L6.5 -6 L6.5 30 L-6.5 30 Z" fill="#cba47c"/>
<rect x="-5" y="-5" width="10" height="9" fill="#a4d3f2"/>
<circle cx="0" cy="1.5" r="2" fill="#1e1e1e"/>
<circle cx="-2" cy="11" r="1.8" fill="#1e1e1e"/><circle cx="2" cy="11" r="1.8" fill="#1e1e1e"/>
<circle cx="-2" cy="10.5" r="0.7" fill="#fff"/><circle cx="2" cy="10.5" r="0.7" fill="#fff"/>
<rect x="-6" y="18" width="12" height="11" fill="#7e5125"/>
<rect x="-6.5" y="30" width="13" height="10" fill="#2a2a2a"/>
<path d="M-5 33 H5 M-5 36.5 H5" stroke="#eee" stroke-width="1.1"/>
<rect x="-5" y="41" width="10" height="6" fill="#d8dadc"/>
</g>
<!-- path line -->
<line x1="475.6" y1="385.3" x2="651" y2="691.5" stroke="#fff" stroke-width="8.5"/>
<line x1="475.6" y1="385.3" x2="651" y2="691.5" stroke="#000" stroke-width="5" stroke-dasharray="10.3 11.1" stroke-dashoffset="-1"/>
<circle cx="48.6" cy="145" r="12.2" fill="#fff" stroke="#6d7378" stroke-width="1"/><circle cx="48.6" cy="145" r="9.4" fill="url(#hgrad)"/>
<circle cx="475.5" cy="145" r="12.2" fill="#fff" stroke="#6d7378" stroke-width="1"/><circle cx="475.5" cy="145" r="9.4" fill="url(#hgrad)"/>
<circle cx="902.5" cy="145" r="12.2" fill="#fff" stroke="#6d7378" stroke-width="1"/><circle cx="902.5" cy="145" r="9.4" fill="url(#hgrad)"/>
<circle cx="48.6" cy="385.5" r="12.2" fill="#fff" stroke="#6d7378" stroke-width="1"/><circle cx="48.6" cy="385.5" r="9.4" fill="url(#hgrad)"/>
<circle cx="902.5" cy="385.5" r="12.2" fill="#fff" stroke="#6d7378" stroke-width="1"/><circle cx="902.5" cy="385.5" r="9.4" fill="url(#hgrad)"/>
<circle cx="48.6" cy="626" r="12.2" fill="#fff" stroke="#6d7378" stroke-width="1"/><circle cx="48.6" cy="626" r="9.4" fill="url(#hgrad)"/>
<circle cx="475.5" cy="626" r="12.2" fill="#fff" stroke="#6d7378" stroke-width="1"/><circle cx="475.5" cy="626" r="9.4" fill="url(#hgrad)"/>
<circle cx="902.5" cy="626" r="12.2" fill="#fff" stroke="#6d7378" stroke-width="1"/><circle cx="902.5" cy="626" r="9.4" fill="url(#hgrad)"/>

<circle cx="475.6" cy="385.3" r="10.4" fill="#f2c200" stroke="#353535" stroke-width="1.8"/>
<g stroke="#fff" stroke-width="1.5"><path d="M475.6 378.1 V382.7 M475.6 387.9 V392.5 M468.4 385.3 H473.0 M478.2 385.3 H482.8"/></g>
<circle cx="475.6" cy="385.3" r="2.8" fill="#333"/>
<circle cx="651" cy="691.5" r="10.6" fill="#fff" stroke="#3a3a3a" stroke-width="1.6"/>
<g font-family="Liberation Sans, sans-serif" font-weight="bold" fill="#fff" stroke="#000" stroke-width="4.2" paint-order="stroke" stroke-linejoin="round">
<text x="496" y="393.3" font-size="20" textLength="28" lengthAdjust="spacingAndGlyphs">9 s</text>
<text x="672" y="698.8" font-size="21" textLength="28.5" lengthAdjust="spacingAndGlyphs">0 s</text>
</g>
</svg>
<svg width="1487" height="1016" viewBox="0 0 1487 1016">
<!-- window buttons -->
<g fill="none" stroke="#5a6470" stroke-width="2.2">
<rect x="1298" y="31" width="14" height="14"/>
<path d="M1426 31.2 L1440.2 45.2 M1440.2 31.2 L1426 45.2" stroke-linecap="round" stroke-width="2.5"/>
</g>
<g fill="#5a6470">
<rect x="1365" y="30" width="10" height="11"/>
<rect x="1363" y="40" width="14" height="2"/>
<rect x="1369" y="42" width="2" height="6"/>
</g>
<rect x="1367" y="32" width="2.5" height="8" fill="#e2ecf8"/>

<!-- toolbar separators -->
<g fill="#8f96a0">
<rect x="64" y="72" width="1" height="40"/>
<rect x="165" y="72" width="1" height="40"/>
<rect x="250" y="72" width="1" height="40"/>
<rect x="347" y="72" width="1" height="40"/>
<rect x="444" y="72" width="1" height="40"/>
<rect x="144" y="956" width="1" height="40"/>
<rect x="333" y="956" width="1" height="40"/>
<rect x="518" y="956" width="1" height="40"/>
</g>
<!-- active button -->
<rect x="299" y="70" width="46" height="44" rx="6" fill="#35a7d8"/>

<!-- icon: select -->
<rect x="26.4" y="79.3" width="25.4" height="25.4" fill="none" stroke="#111" stroke-width="2.6" stroke-dasharray="4.3 2.05" stroke-linecap="butt" stroke-dashoffset="-1"/>
<path d="M32.4 82 L32.4 98 L37.6 95.3 L40.6 101.5 L43.9 100 L41.2 94.1 L45.7 92 Z" fill="none" stroke="#111" stroke-width="2" stroke-linejoin="round"/>
<!-- icon: dashed V -->
<g fill="none" stroke="#111" stroke-width="2.6" stroke-dasharray="1.6 3.7" stroke-linecap="round">
<path d="M77 79 L86.6 98 L100 81.5"/>
<path d="M77 92 C78 101 83 104.7 89.5 104.7 C96 104.7 102 100 103 92"/>
</g>
<!-- icon: bars -->
<g stroke="#111" stroke-width="1.5" fill="none">
<rect x="127" y="79.5" width="26" height="4" rx="1"/>
<rect x="127" y="93.5" width="26" height="4" rx="1"/>
<rect x="127" y="100.5" width="26" height="4" rx="1"/>
</g>
<rect x="126" y="86" width="28" height="5" fill="#111"/>
<!-- icon: grid -->
<path d="M186.2 79.2 V80.6 M186.2 84.4 V89.6 M186.2 94.2 V99.4 M186.2 103.2 V104.7 M195.75 79.2 V80.6 M195.75 84.4 V89.6 M195.75 94.2 V99.4 M195.75 103.2 V104.7 M178.2 87.1 H179.7 M183.3 87.1 H189.0 M193.1 87.1 H198.6 M202.3 87.1 H203.9 M178.2 96.7 H179.7 M183.3 96.7 H189.0 M193.1 96.7 H198.6 M202.3 96.7 H203.9" fill="none" stroke="#111" stroke-width="2.6" stroke-linecap="round"/>
<!-- dropdown arrows -->
<g fill="#2b3340">
<path d="M221.5 87 H239.5 L230.5 96 Z"/>
<path d="M500.5 86.5 H518.5 L509.5 96 Z"/>
<path d="M116 970.5 H133 L124.5 980 Z"/>
<path d="M772.5 970.5 H790 L781.2 980 Z"/>
</g>
<!-- icon: S-curve -->
<path d="M262.5 86 C267 82 272 78.6 277 78.6 C283 78.6 287 80.5 286.5 84.5 C286 89 279 91 273 93.5 C267 96 264.5 99 265.5 101.8 C267 105 272 105.2 277 104.2 C282 103.2 286 100.5 289 97.8" fill="none" stroke="#111" stroke-width="2.4" stroke-linecap="round"/>
<path d="M282 97.8 H289.2 V104.8" fill="none" stroke="#111" stroke-width="2.4" stroke-linecap="butt" stroke-linejoin="miter"/>
<!-- camera icon -->
<g stroke="#111" fill="none" stroke-width="2.6" stroke-linejoin="round">
<rect x="309.7" y="82.7" width="18.2" height="18.2"/>
<path d="M329.1 87 L334.6 82.3 V101.6 L329.1 96"/>
</g>
<g stroke="#111" stroke-width="1.6" fill="#111">
<path d="M313.5 92 H324 M318.7 86.8 V97.2" fill="none"/>
<path d="M311.7 92 L314.2 89.7 L315.5 92 L314.2 94.3 Z M325.7 92 L323.2 89.7 L321.9 92 L323.2 94.3 Z M318.7 85 L316.4 87.5 L318.7 88.8 L321 87.5 Z M318.7 99 L316.4 96.5 L318.7 95.2 L321 96.5 Z" stroke="none"/>
</g>
<!-- curve + -->
<g fill="none" stroke="#111" stroke-width="2.3" stroke-linecap="round">
<path d="M362.5 105 C362.8 99 364.2 95 366.3 92"/>
<path d="M370.8 87.2 C375 83.5 380 81.8 386 81.5"/>
<circle cx="368.3" cy="89.4" r="3.2"/>
<path d="M371.5 96.4 H385 M378.3 89 V103.4"/>
<path d="M408 105 C408.3 99 409.7 95 411.8 92"/>
<path d="M416.3 87.2 C420.5 83.5 425.5 81.8 431.5 81.5"/>
<circle cx="413.8" cy="89.4" r="3.2"/>
<path d="M417 96.4 H431"/>
</g>
<!-- list icon -->
<g fill="none" stroke="#111" stroke-width="2.5" stroke-linecap="round">
<rect x="457.2" y="79.6" width="6.3" height="6.3" rx="1"/>
<rect x="457.2" y="89.2" width="6.3" height="6.3" rx="1"/>
<rect x="457.2" y="98.7" width="6.3" height="6.3" rx="1"/>
<path d="M467.6 82.4 H483 M467.6 91.9 H483 M467.6 101.4 H483"/>
</g>
<!-- spin arrows -->
<g fill="#5b6570">
<path d="M818 86.8 L823.5 80.8 L829 86.8 Z"/>
<path d="M818 96.5 L823.5 102.5 L829 96.5 Z"/>
</g>
<!-- save icon -->
<g fill="none" stroke="#111" stroke-width="2.5" stroke-linejoin="round">
<path d="M851.3 80.1 H871 L876.4 85.5 V103.5 H851.3 Z"/>
<path d="M857.6 80.1 V86 H870.6 V80.1"/>
<rect x="856.2" y="93.8" width="15.3" height="9.7"/>
</g>
<!-- bottom: play -->
<path d="M28.5 963.5 L50.5 976 L28.5 988.5 Z" fill="#7692a8" stroke="#15304a" stroke-width="2.4" stroke-linejoin="round"/>
<g stroke="#15304a" stroke-width="2.2" fill="none" stroke-linejoin="round">
<path d="M74.8 963 H82 V966.3 L78.4 969 L74.8 966.3 Z"/>
<path d="M78.4 973 V989" stroke-linecap="round"/>
</g>
<path d="M83.5 972.5 L96 980 L83.5 987.5 Z" fill="#7692a8" stroke="#15304a" stroke-width="2.2" stroke-linejoin="round"/>
<g fill="none" stroke="#707377" stroke-width="2.3" stroke-linejoin="round" stroke-linecap="round">
<path d="M173 963 V988.8 L157.5 975.9 Z"/><path d="M182.7 963 V988.8 L167 975.9 Z" fill="#e2ecf8"/>
<path d="M204.7 963 V988.8 M226.9 963 V988.8 L205 975.9 Z"/>
<path d="M250.5 963 V988.8 L272.9 975.9 Z M273.2 963 V988.8"/>
<path d="M305 963 V988.8 L321.3 975.9 Z"/><path d="M294.7 963 V988.8 L311.6 975.9 Z" fill="#e2ecf8"/>
</g>
<!-- eye -->
<g fill="none" stroke="#8b8d90" stroke-width="2">
<path d="M531.5 964 H539.5 V967 L535.5 970 L531.5 967 Z"/>
<path d="M535.5 970 V988"/>
<path d="M538.5 980.5 Q549 970.5 560 980.5 Q549 990.5 538.5 980.5 Z"/>
</g>
<circle cx="549" cy="980.5" r="3" fill="#8b8d90"/>
<!-- preview icon -->
<g fill="none" stroke="#15253a" stroke-width="2.3">
<rect x="732" y="963" width="20" height="14"/>
<path d="M738.5 966 L746 970 L738.5 974 Z" stroke-width="1.8" stroke-linejoin="round"/>
</g>
<g fill="#15253a">
<rect x="729" y="984" width="3" height="3"/><rect x="735" y="984" width="3" height="3"/><rect x="741" y="984" width="3" height="3"/>
<path d="M748 981.5 L755 985.5 L748 989.5 Z"/>
</g>
<!-- chart icon -->
<g fill="#15304a">
<rect x="813.6" y="975.6" width="4.2" height="13.4" rx="0.8"/>
<rect x="820" y="969" width="4.2" height="20" rx="0.8"/>
<rect x="813.4" y="962.4" width="4.2" height="1.7" rx="0.8"/><rect x="819.8" y="962.4" width="4.2" height="1.7" rx="0.8"/><rect x="826.4" y="962.4" width="5.6" height="1.5" rx="0.6" fill="#3b4d60"/>
<rect x="826.5" y="965.8" width="2.6" height="1.2" rx="0.5"/><rect x="826.5" y="969.0" width="2.6" height="1.2" rx="0.5"/><rect x="826.5" y="972.1" width="5.5" height="1.4" rx="0.6"/><rect x="826.5" y="975.4" width="2.6" height="1.2" rx="0.5"/><rect x="826.5" y="978.6" width="2.6" height="1.2" rx="0.5"/><rect x="826.5" y="981.7" width="5.5" height="1.4" rx="0.6"/><rect x="826.5" y="985.0" width="2.6" height="1.2" rx="0.5"/><rect x="826.5" y="988.2" width="2.6" height="1.2" rx="0.5"/>
</g>
<!-- slider -->
<circle cx="1041" cy="972" r="11.2" fill="#0d3d66"/>
<rect x="1034" y="970.7" width="14" height="2.8" fill="#fff"/>
<rect x="1064" y="968.8" width="300" height="6" rx="3" fill="#9199a6"/>
<circle cx="1256" cy="972" r="8.6" fill="#2a78b4"/>
<circle cx="1387" cy="972" r="11.2" fill="#0d3d66"/>
<rect x="1380" y="970.7" width="14" height="2.8" fill="#fff"/>
<rect x="1385.6" y="965" width="2.8" height="14" fill="#fff"/>
<g fill="#111">
<rect x="1073" y="985" width="1.3" height="9"/>
<rect x="1120" y="985" width="1.3" height="6"/>
<rect x="1167" y="985" width="1.3" height="6"/>
<rect x="1214" y="985" width="1.3" height="6"/>
<rect x="1261" y="985" width="1.3" height="6"/>
<rect x="1308" y="985" width="1.3" height="6"/>
<rect x="1355" y="985" width="1.3" height="9"/>
</g>
<g fill="none">
<circle cx="1440.5" cy="972.5" r="9.5" stroke="#111" stroke-width="2.2"/>
<rect x="1435.5" y="967.3" width="10" height="10" stroke="#0d3d66" stroke-width="2.2"/>
<path d="M1433.5 979.5 L1424.5 988.5" stroke="#0d3d66" stroke-width="2.4" stroke-linecap="round"/>
</g>
</svg>
</body></html>
